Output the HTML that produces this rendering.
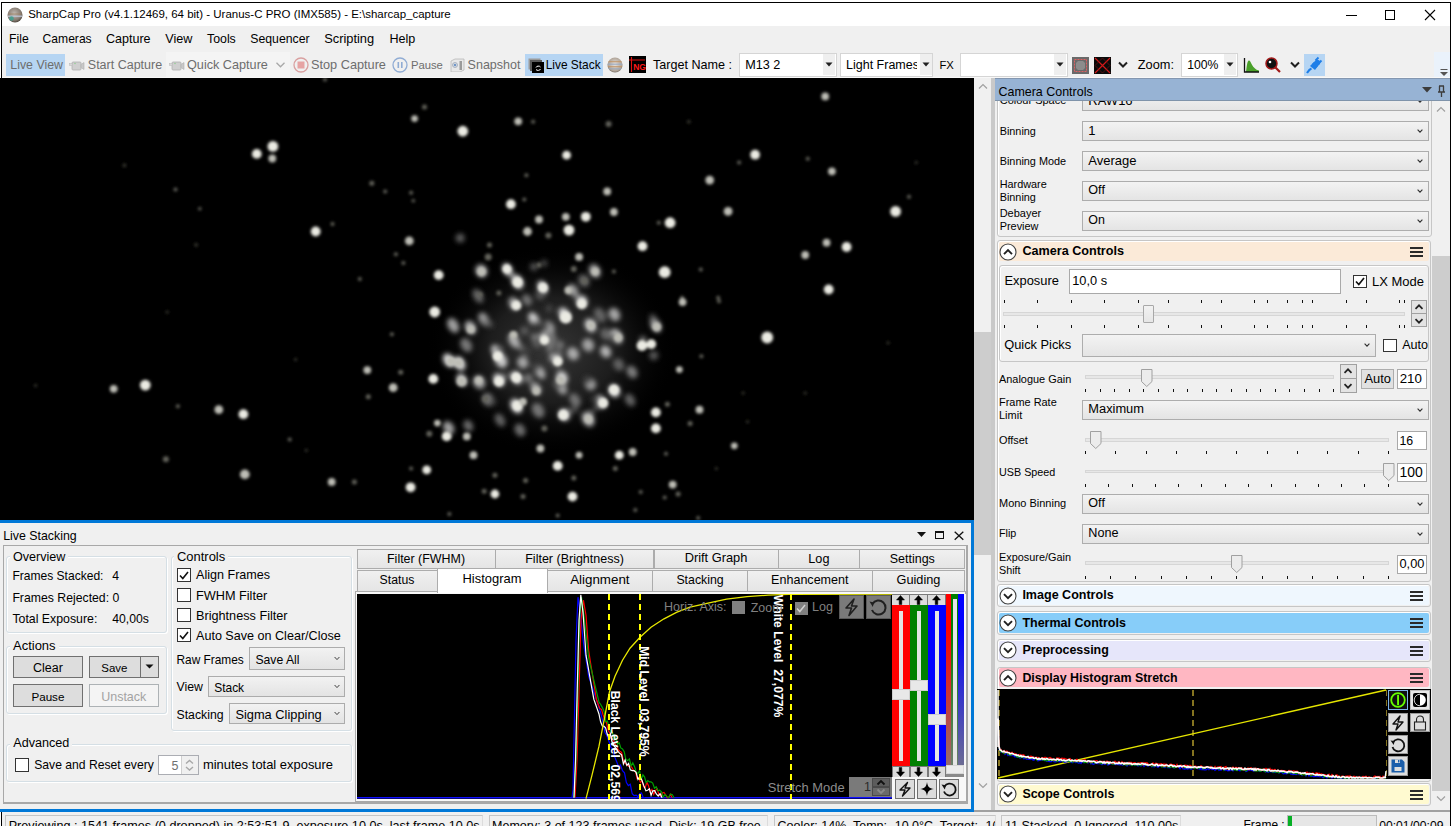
<!DOCTYPE html><html><head><meta charset="utf-8"><style>
html,body{margin:0;padding:0;width:1452px;height:826px;overflow:hidden;position:relative;font-family:"Liberation Sans",sans-serif}
div{position:absolute;box-sizing:border-box}
.t{white-space:nowrap}
</style></head><body>
<div style="left:0px;top:0px;width:1452px;height:826px;background:#ffffff"></div>
<div style="left:1px;top:2px;width:1450px;height:824px;background:#000"></div>
<div style="left:2px;top:3px;width:1448px;height:23px;background:#fff"></div>
<svg style="position:absolute;left:7px;top:7px;" width="16" height="16" viewBox="0 0 16 16"><defs><radialGradient id="jg" cx="45%" cy="40%" r="65%"><stop offset="0" stop-color="#c0b8b0"/><stop offset="0.7" stop-color="#857a70"/><stop offset="1" stop-color="#403830"/></radialGradient></defs><circle cx="8" cy="8" r="7.5" fill="url(#jg)"/><rect x="1" y="8.5" width="14" height="1.6" fill="#c0c8d8" opacity="0.8"/><rect x="1.5" y="6.5" width="13" height="1" fill="#a08060" opacity="0.7"/><circle cx="4.5" cy="11.5" r="2.3" fill="#40a090" opacity="0.85"/></svg>
<div class="t" style="left:28.2px;top:9.27px;font-size:11.49px;line-height:11.49px;color:#000;">SharpCap Pro (v4.1.12469, 64 bit) - Uranus-C PRO (IMX585) - E:\sharcap_capture</div>
<div style="left:1346px;top:15px;width:11px;height:1px;background:#000"></div>
<div style="left:1385px;top:10px;width:10px;height:10px;border:1px solid #000"></div>
<svg style="position:absolute;left:1424px;top:9px;" width="12" height="12" viewBox="0 0 12 12"><path d="M1 1L11 11M11 1L1 11" stroke="#000" stroke-width="1.1"/></svg>
<div style="left:2px;top:26px;width:1448px;height:26px;background:#f0f0f0"></div>
<div class="t" style="left:9.1px;top:33.25px;font-size:12.23px;line-height:12.23px;color:#000;">File</div>
<div class="t" style="left:42.6px;top:33.36px;font-size:12.1px;line-height:12.1px;color:#000;">Cameras</div>
<div class="t" style="left:106px;top:32.98px;font-size:12.54px;line-height:12.54px;color:#000;">Capture</div>
<div class="t" style="left:165.2px;top:32.89px;font-size:12.65px;line-height:12.65px;color:#000;">View</div>
<div class="t" style="left:207px;top:33.15px;font-size:12.34px;line-height:12.34px;color:#000;">Tools</div>
<div class="t" style="left:250.3px;top:33.20px;font-size:12.28px;line-height:12.28px;color:#000;">Sequencer</div>
<div class="t" style="left:324.2px;top:32.72px;font-size:12.85px;line-height:12.85px;color:#000;">Scripting</div>
<div class="t" style="left:389.4px;top:32.98px;font-size:12.55px;line-height:12.55px;color:#000;">Help</div>
<div style="left:2px;top:52px;width:1448px;height:25px;background:#f0f0f0"></div>
<div style="left:2px;top:77px;width:1448px;height:1px;background:#f8f8f8"></div>
<div style="left:166px;top:52px;width:124px;height:25px;background:#f4f4f4"></div>
<div style="left:6px;top:54px;width:59px;height:22px;background:#b6d5f3"></div>
<div class="t" style="left:10.3px;top:59.33px;font-size:12.37px;line-height:12.37px;color:#6d6d6d;">Live View</div>
<svg style="position:absolute;left:69px;top:60px;" width="16" height="11" viewBox="0 0 16 11"><rect x="3" y="2" width="9" height="8" rx="1" fill="#cfcfcf" stroke="#b0b0b0" stroke-width="0.8"/><path d="M12 4.5L15 2.5V9.5L12 7.5Z" fill="#c8c8c8" stroke="#b0b0b0" stroke-width="0.6"/><rect x="0.5" y="3.5" width="3" height="2" fill="#d8d8d8" stroke="#b8b8b8" stroke-width="0.5"/><circle cx="6" cy="3.5" r="0.7" fill="#8c8"/></svg>
<div class="t" style="left:87.8px;top:59.21px;font-size:12.51px;line-height:12.51px;color:#6d6d6d;">Start Capture</div>
<svg style="position:absolute;left:169px;top:60px;" width="16" height="11" viewBox="0 0 16 11"><rect x="3" y="2" width="9" height="8" rx="1" fill="#cfcfcf" stroke="#b0b0b0" stroke-width="0.8"/><path d="M12 4.5L15 2.5V9.5L12 7.5Z" fill="#c8c8c8" stroke="#b0b0b0" stroke-width="0.6"/><rect x="0.5" y="3.5" width="3" height="2" fill="#d8d8d8" stroke="#b8b8b8" stroke-width="0.5"/><circle cx="6" cy="3.5" r="0.7" fill="#8c8"/></svg>
<div class="t" style="left:187px;top:59.07px;font-size:12.67px;line-height:12.67px;color:#6d6d6d;">Quick Capture</div>
<svg style="position:absolute;left:276px;top:62px;" width="9" height="6" viewBox="0 0 9 6"><path d="M0.5 0.8L4.5 4.8L8.5 0.8" fill="none" stroke="#a8a8a8" stroke-width="1.3"/></svg>
<svg style="position:absolute;left:293px;top:57px;" width="16" height="16" viewBox="0 0 16 16"><circle cx="8" cy="8" r="7" fill="none" stroke="#d9a0a0" stroke-width="1.3"/><rect x="4.5" y="4.5" width="7" height="7" fill="#e6a3a3"/></svg>
<div class="t" style="left:311px;top:59.02px;font-size:12.73px;line-height:12.73px;color:#6d6d6d;">Stop Capture</div>
<svg style="position:absolute;left:392px;top:57px;" width="16" height="16" viewBox="0 0 16 16"><circle cx="8" cy="8" r="7" fill="none" stroke="#90acd4" stroke-width="1.3"/><rect x="5.5" y="5" width="1.6" height="6" fill="#90acd4"/><rect x="9" y="5" width="1.6" height="6" fill="#90acd4"/></svg>
<div class="t" style="left:410.9px;top:60.24px;font-size:11.29px;line-height:11.29px;color:#6d6d6d;">Pause</div>
<svg style="position:absolute;left:450px;top:58px;" width="15" height="14" viewBox="0 0 15 14"><path d="M1 3L5 1H14V12L10 14H1Z" fill="#e8e8e8" stroke="#b8b8b8" stroke-width="0.8"/><rect x="9.5" y="3" width="2.5" height="9" fill="#9a9a9a"/><circle cx="5" cy="7" r="2.5" fill="#d0d8e0" stroke="#a0a8b8" stroke-width="0.8"/><circle cx="5" cy="7" r="1" fill="#5080c0"/></svg>
<div class="t" style="left:467.6px;top:59.20px;font-size:12.52px;line-height:12.52px;color:#6d6d6d;">Snapshot</div>
<div style="left:525px;top:54px;width:78px;height:22px;background:#b6d5f3"></div>
<svg style="position:absolute;left:528px;top:58px;" width="16" height="15" viewBox="0 0 16 15"><rect x="0.5" y="0.5" width="12" height="11" fill="#9a9a9a"/><rect x="2" y="2" width="12" height="11" fill="#5a5a5a"/><rect x="4" y="4" width="12" height="11" fill="#000"/><path d="M8 9.5a2.5 2 0 0 1 4.5 -0.5M12.5 11a2.5 2 0 0 1 -4.5 0.5" fill="none" stroke="#fff" stroke-width="1"/></svg>
<div class="t" style="left:545.7px;top:59.71px;font-size:11.92px;line-height:11.92px;color:#000;">Live Stack</div>
<svg style="position:absolute;left:607px;top:57px;" width="16" height="16" viewBox="0 0 16 16"><defs><radialGradient id="jg2" cx="50%" cy="45%" r="60%"><stop offset="0" stop-color="#e8e4e0"/><stop offset="0.75" stop-color="#b0a498"/><stop offset="1" stop-color="#605850"/></radialGradient><clipPath id="jc"><circle cx="8" cy="8" r="7.5"/></clipPath></defs><circle cx="8" cy="8" r="7.5" fill="url(#jg2)"/><g clip-path="url(#jc)"><rect x="0" y="4" width="16" height="1.3" fill="#c09060" opacity="0.7"/><rect x="0" y="6.5" width="16" height="1.5" fill="#98a8c0" opacity="0.7"/><rect x="0" y="9" width="16" height="1.2" fill="#c09060" opacity="0.7"/><rect x="0" y="11" width="16" height="1.5" fill="#98a8c0" opacity="0.6"/></g></svg>
<svg style="position:absolute;left:629px;top:56px;" width="17" height="17" viewBox="0 0 17 17"><rect x="0" y="0" width="17" height="17" fill="#000"/><path d="M2.5 1V16M0 4H16" stroke="#e01010" stroke-width="1.1"/><text x="4.2" y="14" font-family="Liberation Sans" font-size="8.5" font-weight="bold" fill="#ff1a1a">NG</text></svg>
<div class="t" style="left:653px;top:59.15px;font-size:12.58px;line-height:12.58px;color:#000;">Target Name :</div>
<div style="left:738.7px;top:52.5px;width:98.0px;height:24.5px;background:#fff;border:1px solid #d5d5d5"></div>
<div style="left:822.7px;top:54px;width:12px;height:21px;background:#efefef"></div>
<svg style="position:absolute;left:824.7px;top:62px;" width="8" height="5" viewBox="0 0 8 5"><path d="M0.5 0.5H7.5L4 4.5Z" fill="#202020"/></svg>
<div class="t" style="left:745.2px;top:59.07px;font-size:12.67px;line-height:12.67px;color:#000;">M13 2</div>
<div style="left:839.7px;top:52.5px;width:93.79999999999995px;height:24.5px;background:#fff;border:1px solid #d5d5d5"></div>
<div style="left:919.5px;top:54px;width:12px;height:21px;background:#efefef"></div>
<svg style="position:absolute;left:921.5px;top:62px;" width="8" height="5" viewBox="0 0 8 5"><path d="M0.5 0.5H7.5L4 4.5Z" fill="#202020"/></svg>
<div class="t" style="left:846px;top:59.22px;width:71px;overflow:hidden;font-size:12.5px;line-height:12.5px">Light Frames</div>
<div class="t" style="left:939.5px;top:60.28px;font-size:11.25px;line-height:11.25px;color:#000;">FX</div>
<div style="left:959.7px;top:52.5px;width:107.89999999999986px;height:24.5px;background:#fff;border:1px solid #d5d5d5"></div>
<div style="left:1053.6px;top:54px;width:12px;height:21px;background:#efefef"></div>
<svg style="position:absolute;left:1055.6px;top:62px;" width="8" height="5" viewBox="0 0 8 5"><path d="M0.5 0.5H7.5L4 4.5Z" fill="#202020"/></svg>
<svg style="position:absolute;left:1072px;top:57px;" width="17" height="17" viewBox="0 0 17 17"><rect x="0" y="0" width="17" height="17" fill="#6a6a6a"/><rect x="2.5" y="2.5" width="12" height="12" fill="none" stroke="#e06060" stroke-width="1" stroke-dasharray="2 1"/><path d="M6 4H11L13 6V11L11 13H6L4 11V6Z" fill="#8c8c8c"/></svg>
<svg style="position:absolute;left:1094px;top:57px;" width="17" height="17" viewBox="0 0 17 17"><rect x="0" y="0" width="17" height="17" fill="#0a0a0a"/><path d="M1 1L16 16M16 1L1 16" stroke="#d01818" stroke-width="1.2"/><path d="M1 8.5L8.5 1L16 8.5L8.5 16Z" fill="none" stroke="#701010" stroke-width="0.7"/></svg>
<svg style="position:absolute;left:1118px;top:61px;" width="10" height="7" viewBox="0 0 10 7"><path d="M1 1.5L5 5.5L9 1.5" fill="none" stroke="#202020" stroke-width="2"/></svg>
<div class="t" style="left:1137.8px;top:58.99px;font-size:12.77px;line-height:12.77px;color:#000;">Zoom:</div>
<div style="left:1180.7px;top:52.5px;width:57.299999999999955px;height:24.5px;background:#fff;border:1px solid #d5d5d5"></div>
<div style="left:1224px;top:54px;width:12px;height:21px;background:#efefef"></div>
<svg style="position:absolute;left:1226px;top:62px;" width="8" height="5" viewBox="0 0 8 5"><path d="M0.5 0.5H7.5L4 4.5Z" fill="#202020"/></svg>
<div class="t" style="left:1187.2px;top:59.47px;font-size:12.2px;line-height:12.2px;color:#000;">100%</div>
<svg style="position:absolute;left:1243px;top:57px;" width="17" height="16" viewBox="0 0 17 16"><path d="M3 15C4 5 5 3.5 6 3.5C8 3.5 9 12 16 13.5V15Z" fill="#4aa02a"/><path d="M1.5 1V15H16" stroke="#101010" stroke-width="1.3" fill="none"/></svg>
<svg style="position:absolute;left:1265px;top:57px;" width="16" height="16" viewBox="0 0 16 16"><circle cx="6.5" cy="6.5" r="5.5" fill="#101010" stroke="#a01818" stroke-width="1.5"/><path d="M10.5 10.5L15 15" stroke="#a01818" stroke-width="2.2"/><circle cx="5" cy="5" r="1.3" fill="#fff"/></svg>
<svg style="position:absolute;left:1290px;top:61px;" width="10" height="7" viewBox="0 0 10 7"><path d="M1 1.5L5 5.5L9 1.5" fill="none" stroke="#202020" stroke-width="2"/></svg>
<div style="left:1303.6px;top:54px;width:21px;height:22px;background:#b6d5f3"></div>
<svg style="position:absolute;left:1305px;top:56px;" width="18" height="18" viewBox="0 0 18 18"><path d="M2 17C4 14 5 13 6.5 12.5" stroke="#1f7fe8" stroke-width="2.2" fill="none"/><path d="M5 10L9 6L13 10L10 14Z" fill="#1f7fe8"/><path d="M7 8L11 4A3 3 0 0 1 15 8L11 12Z" fill="#1f7fe8"/><path d="M10.5 4.5L13.5 1.5M13.5 7.5L16.5 4.5" stroke="#1f7fe8" stroke-width="1.8"/></svg>
<div style="left:1434px;top:52px;width:16px;height:25px;background:#eaf2fb"></div>
<svg style="position:absolute;left:1440px;top:69px;" width="8" height="8" viewBox="0 0 8 8"><path d="M0.5 0.5H7.5" stroke="#555" stroke-width="1"/><path d="M0 3H8L4 7Z" fill="#555"/></svg>
<div style="left:0px;top:78px;width:974px;height:442px;background:#000"></div>
<svg style="position:absolute;left:0px;top:78px;" width="974" height="442" viewBox="0 0 974 442"><defs><filter id="bl" x="-50%" y="-50%" width="200%" height="200%"><feGaussianBlur stdDeviation="1.4"/></filter><filter id="bl3" x="-50%" y="-50%" width="200%" height="200%"><feGaussianBlur stdDeviation="2.4"/></filter><radialGradient id="core" cx="50%" cy="50%" r="50%"><stop offset="0" stop-color="#6a6a6a"/><stop offset="0.5" stop-color="#3a3a3a"/><stop offset="1" stop-color="#000" stop-opacity="0"/></radialGradient></defs><ellipse cx="552" cy="272" rx="125" ry="105" fill="url(#core)" opacity="0.5"/><g filter="url(#bl3)"><ellipse cx="481.4" cy="192.9" rx="5.9" ry="6.8" transform="rotate(-30 481.4 192.9)" fill="rgb(160,160,160)"/><ellipse cx="507.6" cy="191.8" rx="4.6" ry="7.1" transform="rotate(-30 507.6 191.8)" fill="rgb(201,201,201)"/><ellipse cx="517.4" cy="203.8" rx="5.4" ry="7.8" transform="rotate(-30 517.4 203.8)" fill="rgb(211,211,211)"/><ellipse cx="542.5" cy="209.2" rx="4.6" ry="6.9" transform="rotate(-30 542.5 209.2)" fill="rgb(206,206,206)"/><ellipse cx="573.0" cy="212.5" rx="4.9" ry="7.1" transform="rotate(-30 573.0 212.5)" fill="rgb(152,152,152)"/><ellipse cx="581.7" cy="223.4" rx="5.7" ry="6.2" transform="rotate(-30 581.7 223.4)" fill="rgb(201,201,201)"/><ellipse cx="594.8" cy="192.9" rx="5.4" ry="7.2" transform="rotate(-30 594.8 192.9)" fill="rgb(157,157,157)"/><ellipse cx="583.9" cy="202.7" rx="5.4" ry="6.8" transform="rotate(-30 583.9 202.7)" fill="rgb(96,96,96)"/><ellipse cx="478.1" cy="218.0" rx="4.6" ry="7.7" transform="rotate(-30 478.1 218.0)" fill="rgb(102,102,102)"/><ellipse cx="514.1" cy="225.6" rx="5.1" ry="7.1" transform="rotate(-30 514.1 225.6)" fill="rgb(159,159,159)"/><ellipse cx="564.3" cy="236.5" rx="5.0" ry="7.6" transform="rotate(-30 564.3 236.5)" fill="rgb(218,218,218)"/><ellipse cx="533.7" cy="240.9" rx="4.7" ry="7.1" transform="rotate(-30 533.7 240.9)" fill="rgb(205,205,205)"/><ellipse cx="549.0" cy="249.6" rx="5.1" ry="7.1" transform="rotate(-30 549.0 249.6)" fill="rgb(156,156,156)"/><ellipse cx="590.4" cy="247.4" rx="5.3" ry="7.2" transform="rotate(-30 590.4 247.4)" fill="rgb(202,202,202)"/><ellipse cx="614.4" cy="236.5" rx="5.5" ry="6.9" transform="rotate(-30 614.4 236.5)" fill="rgb(165,165,165)"/><ellipse cx="616.6" cy="258.3" rx="5.2" ry="7.8" transform="rotate(-30 616.6 258.3)" fill="rgb(210,210,210)"/><ellipse cx="655.8" cy="247.4" rx="4.9" ry="7.6" transform="rotate(-30 655.8 247.4)" fill="rgb(161,161,161)"/><ellipse cx="544.6" cy="260.5" rx="5.7" ry="6.2" transform="rotate(-30 544.6 260.5)" fill="rgb(222,222,222)"/><ellipse cx="453.1" cy="247.4" rx="5.3" ry="7.8" transform="rotate(-30 453.1 247.4)" fill="rgb(159,159,159)"/><ellipse cx="470.5" cy="249.6" rx="5.2" ry="7.2" transform="rotate(-30 470.5 249.6)" fill="rgb(173,173,173)"/><ellipse cx="483.6" cy="240.9" rx="4.7" ry="6.8" transform="rotate(-30 483.6 240.9)" fill="rgb(152,152,152)"/><ellipse cx="514.1" cy="262.7" rx="5.0" ry="7.9" transform="rotate(-30 514.1 262.7)" fill="rgb(174,174,174)"/><ellipse cx="496.7" cy="273.6" rx="4.6" ry="7.3" transform="rotate(-30 496.7 273.6)" fill="rgb(213,213,213)"/><ellipse cx="466.2" cy="267.0" rx="5.3" ry="7.6" transform="rotate(-30 466.2 267.0)" fill="rgb(119,119,119)"/><ellipse cx="448.7" cy="282.3" rx="5.0" ry="7.4" transform="rotate(-30 448.7 282.3)" fill="rgb(226,226,226)"/><ellipse cx="459.6" cy="285.5" rx="5.2" ry="7.6" transform="rotate(-30 459.6 285.5)" fill="rgb(219,219,219)"/><ellipse cx="501.0" cy="282.3" rx="5.8" ry="7.9" transform="rotate(-30 501.0 282.3)" fill="rgb(202,202,202)"/><ellipse cx="522.8" cy="284.5" rx="5.5" ry="6.1" transform="rotate(-30 522.8 284.5)" fill="rgb(165,165,165)"/><ellipse cx="555.5" cy="282.3" rx="5.6" ry="7.3" transform="rotate(-30 555.5 282.3)" fill="rgb(223,223,223)"/><ellipse cx="573.0" cy="275.7" rx="5.7" ry="6.6" transform="rotate(-30 573.0 275.7)" fill="rgb(171,171,171)"/><ellipse cx="588.2" cy="267.0" rx="5.8" ry="6.7" transform="rotate(-30 588.2 267.0)" fill="rgb(162,162,162)"/><ellipse cx="605.7" cy="273.6" rx="5.2" ry="6.3" transform="rotate(-30 605.7 273.6)" fill="rgb(180,180,180)"/><ellipse cx="618.7" cy="286.6" rx="5.2" ry="6.4" transform="rotate(-30 618.7 286.6)" fill="rgb(98,98,98)"/><ellipse cx="461.8" cy="301.9" rx="4.7" ry="6.5" transform="rotate(-30 461.8 301.9)" fill="rgb(209,209,209)"/><ellipse cx="479.2" cy="304.1" rx="5.9" ry="7.0" transform="rotate(-30 479.2 304.1)" fill="rgb(162,162,162)"/><ellipse cx="498.9" cy="301.9" rx="5.2" ry="7.1" transform="rotate(-30 498.9 301.9)" fill="rgb(205,205,205)"/><ellipse cx="516.3" cy="299.7" rx="4.7" ry="6.9" transform="rotate(-30 516.3 299.7)" fill="rgb(228,228,228)"/><ellipse cx="535.9" cy="310.6" rx="4.9" ry="6.8" transform="rotate(-30 535.9 310.6)" fill="rgb(167,167,167)"/><ellipse cx="562.1" cy="299.7" rx="5.5" ry="6.8" transform="rotate(-30 562.1 299.7)" fill="rgb(211,211,211)"/><ellipse cx="562.1" cy="310.6" rx="4.7" ry="6.4" transform="rotate(-30 562.1 310.6)" fill="rgb(157,157,157)"/><ellipse cx="590.4" cy="306.3" rx="5.5" ry="6.0" transform="rotate(-30 590.4 306.3)" fill="rgb(157,157,157)"/><ellipse cx="614.4" cy="312.8" rx="5.4" ry="6.5" transform="rotate(-30 614.4 312.8)" fill="rgb(226,226,226)"/><ellipse cx="601.3" cy="323.7" rx="4.7" ry="7.1" transform="rotate(-30 601.3 323.7)" fill="rgb(200,200,200)"/><ellipse cx="516.3" cy="328.0" rx="5.3" ry="7.9" transform="rotate(-30 516.3 328.0)" fill="rgb(219,219,219)"/><ellipse cx="538.1" cy="332.4" rx="5.8" ry="7.9" transform="rotate(-30 538.1 332.4)" fill="rgb(117,117,117)"/><ellipse cx="564.3" cy="336.8" rx="5.5" ry="6.1" transform="rotate(-30 564.3 336.8)" fill="rgb(220,220,220)"/><ellipse cx="588.2" cy="341.1" rx="5.8" ry="7.9" transform="rotate(-30 588.2 341.1)" fill="rgb(178,178,178)"/><ellipse cx="488.0" cy="321.5" rx="5.7" ry="6.8" transform="rotate(-30 488.0 321.5)" fill="rgb(116,116,116)"/><ellipse cx="448.7" cy="349.8" rx="5.1" ry="7.0" transform="rotate(-30 448.7 349.8)" fill="rgb(162,162,162)"/><ellipse cx="468.3" cy="347.7" rx="4.6" ry="6.1" transform="rotate(-30 468.3 347.7)" fill="rgb(107,107,107)"/><ellipse cx="605.7" cy="256.1" rx="5.2" ry="6.2" transform="rotate(-30 605.7 256.1)" fill="rgb(101,101,101)"/><ellipse cx="527.0" cy="222.0" rx="4.6" ry="6.0" transform="rotate(-30 527.0 222.0)" fill="rgb(114,114,114)"/><ellipse cx="600.0" cy="237.0" rx="5.3" ry="7.9" transform="rotate(-30 600.0 237.0)" fill="rgb(99,99,99)"/><ellipse cx="540.0" cy="294.0" rx="4.5" ry="7.7" transform="rotate(-30 540.0 294.0)" fill="rgb(169,169,169)"/><ellipse cx="575.0" cy="322.0" rx="5.1" ry="7.3" transform="rotate(-30 575.0 322.0)" fill="rgb(114,114,114)"/><ellipse cx="632.0" cy="294.0" rx="5.0" ry="6.7" transform="rotate(-30 632.0 294.0)" fill="rgb(125,125,125)"/><ellipse cx="500.0" cy="342.0" rx="4.7" ry="7.0" transform="rotate(-30 500.0 342.0)" fill="rgb(98,98,98)"/><ellipse cx="520.0" cy="352.0" rx="5.2" ry="6.6" transform="rotate(-30 520.0 352.0)" fill="rgb(109,109,109)"/><ellipse cx="630.0" cy="322.0" rx="4.7" ry="6.7" transform="rotate(-30 630.0 322.0)" fill="rgb(99,99,99)"/><circle cx="555.3" cy="274.4" r="3.4" fill="rgb(61,61,61)"/><circle cx="652.7" cy="239.2" r="3.3" fill="rgb(83,83,83)"/><circle cx="537.2" cy="265.0" r="4.7" fill="rgb(101,101,101)"/><circle cx="548.8" cy="264.0" r="4.0" fill="rgb(76,76,76)"/><circle cx="557.7" cy="305.7" r="4.6" fill="rgb(94,94,94)"/><circle cx="535.9" cy="289.4" r="4.2" fill="rgb(74,74,74)"/><circle cx="557.8" cy="286.0" r="4.6" fill="rgb(75,75,75)"/><circle cx="544.0" cy="185.3" r="3.4" fill="rgb(74,74,74)"/><circle cx="642.9" cy="261.7" r="3.6" fill="rgb(110,110,110)"/><circle cx="549.8" cy="270.7" r="4.2" fill="rgb(104,104,104)"/><circle cx="540.2" cy="217.0" r="4.9" fill="rgb(82,82,82)"/><circle cx="492.8" cy="323.7" r="3.2" fill="rgb(74,74,74)"/><circle cx="499.0" cy="271.9" r="4.2" fill="rgb(117,117,117)"/><circle cx="559.8" cy="267.1" r="4.3" fill="rgb(118,118,118)"/><circle cx="546.0" cy="261.5" r="3.8" fill="rgb(118,118,118)"/><circle cx="544.5" cy="247.6" r="4.0" fill="rgb(72,72,72)"/><circle cx="528.2" cy="300.3" r="4.9" fill="rgb(111,111,111)"/><circle cx="533.9" cy="188.8" r="3.8" fill="rgb(89,89,89)"/><circle cx="592.0" cy="333.5" r="3.1" fill="rgb(68,68,68)"/><circle cx="524.5" cy="252.8" r="4.6" fill="rgb(89,89,89)"/><circle cx="614.8" cy="260.0" r="4.9" fill="rgb(102,102,102)"/><circle cx="597.7" cy="328.7" r="3.3" fill="rgb(95,95,95)"/><circle cx="460.2" cy="160.0" r="4.5" fill="rgb(93,93,93)"/><circle cx="558.8" cy="276.1" r="3.4" fill="rgb(115,115,115)"/><circle cx="552.2" cy="275.1" r="3.5" fill="rgb(92,92,92)"/><circle cx="541.6" cy="262.6" r="4.1" fill="rgb(76,76,76)"/><circle cx="549.3" cy="258.1" r="3.9" fill="rgb(117,117,117)"/><circle cx="534.8" cy="259.3" r="4.0" fill="rgb(117,117,117)"/><circle cx="587.4" cy="302.0" r="4.0" fill="rgb(69,69,69)"/><circle cx="653.7" cy="277.6" r="4.6" fill="rgb(88,88,88)"/><circle cx="595.5" cy="321.3" r="3.9" fill="rgb(69,69,69)"/><circle cx="540.3" cy="213.1" r="3.1" fill="rgb(95,95,95)"/><circle cx="521.0" cy="269.8" r="3.2" fill="rgb(109,109,109)"/><circle cx="490.1" cy="246.3" r="3.4" fill="rgb(75,75,75)"/><circle cx="526.0" cy="273.5" r="4.5" fill="rgb(61,61,61)"/><circle cx="555.8" cy="263.9" r="3.7" fill="rgb(88,88,88)"/><circle cx="574.2" cy="330.9" r="3.9" fill="rgb(77,77,77)"/><circle cx="537.2" cy="264.6" r="4.0" fill="rgb(90,90,90)"/><circle cx="550.7" cy="266.4" r="3.5" fill="rgb(119,119,119)"/><circle cx="484.9" cy="244.8" r="3.4" fill="rgb(120,120,120)"/><circle cx="505.9" cy="297.7" r="3.1" fill="rgb(80,80,80)"/><circle cx="551.1" cy="283.8" r="3.4" fill="rgb(64,64,64)"/><circle cx="551.6" cy="258.8" r="4.4" fill="rgb(120,120,120)"/><circle cx="535.2" cy="246.6" r="3.5" fill="rgb(69,69,69)"/><circle cx="549.1" cy="230.5" r="3.8" fill="rgb(66,66,66)"/></g><g filter="url(#bl)"><circle cx="256.8" cy="75.9" r="4.9" fill="rgb(235,235,227)"/><circle cx="272.9" cy="68.4" r="5.4" fill="rgb(235,235,227)"/><circle cx="272.3" cy="80.5" r="3.9" fill="rgb(190,190,182)"/><circle cx="315.7" cy="153.5" r="4.9" fill="rgb(235,235,227)"/><circle cx="124.4" cy="87.4" r="1.8" fill="rgb(60,60,52)"/><circle cx="175.5" cy="111.5" r="2.0" fill="rgb(100,100,92)"/><circle cx="199.8" cy="130.7" r="1.8" fill="rgb(100,100,92)"/><circle cx="196.1" cy="166.9" r="1.8" fill="rgb(60,60,52)"/><circle cx="462.8" cy="53.2" r="5.4" fill="rgb(235,235,227)"/><circle cx="414.6" cy="40.6" r="3.4" fill="rgb(190,190,182)"/><circle cx="424.5" cy="29.1" r="2.5" fill="rgb(100,100,92)"/><circle cx="518.2" cy="43.3" r="3.9" fill="rgb(190,190,182)"/><circle cx="533.1" cy="43.8" r="2.0" fill="rgb(100,100,92)"/><circle cx="608.6" cy="46.0" r="3.0" fill="rgb(100,100,92)"/><circle cx="566.6" cy="77.2" r="4.4" fill="rgb(235,235,227)"/><circle cx="510.9" cy="126.2" r="4.9" fill="rgb(235,235,227)"/><circle cx="524.3" cy="121.4" r="2.0" fill="rgb(100,100,92)"/><circle cx="526.4" cy="97.3" r="2.0" fill="rgb(100,100,92)"/><circle cx="371.8" cy="105.3" r="2.5" fill="rgb(100,100,92)"/><circle cx="385.2" cy="113.4" r="2.0" fill="rgb(100,100,92)"/><circle cx="411.1" cy="114.7" r="2.0" fill="rgb(100,100,92)"/><circle cx="413.3" cy="122.7" r="1.8" fill="rgb(100,100,92)"/><circle cx="607.2" cy="113.4" r="3.9" fill="rgb(190,190,182)"/><circle cx="613.9" cy="134.0" r="3.9" fill="rgb(190,190,182)"/><circle cx="585.8" cy="138.8" r="4.9" fill="rgb(235,235,227)"/><circle cx="565.8" cy="138.8" r="3.9" fill="rgb(190,190,182)"/><circle cx="569.0" cy="152.1" r="5.4" fill="rgb(235,235,227)"/><circle cx="539.0" cy="141.5" r="3.9" fill="rgb(190,190,182)"/><circle cx="527.5" cy="153.5" r="4.4" fill="rgb(190,190,182)"/><circle cx="548.4" cy="157.5" r="3.0" fill="rgb(100,100,92)"/><circle cx="642.5" cy="168.2" r="4.9" fill="rgb(235,235,227)"/><circle cx="409.3" cy="162.9" r="4.4" fill="rgb(190,190,182)"/><circle cx="395.9" cy="176.2" r="2.0" fill="rgb(100,100,92)"/><circle cx="403.4" cy="185.1" r="2.0" fill="rgb(100,100,92)"/><circle cx="332.5" cy="146.0" r="2.0" fill="rgb(100,100,92)"/><circle cx="359.8" cy="201.1" r="2.0" fill="rgb(100,100,92)"/><circle cx="438.7" cy="197.1" r="4.9" fill="rgb(235,235,227)"/><circle cx="481.5" cy="193.6" r="4.4" fill="rgb(190,190,182)"/><circle cx="488.2" cy="178.9" r="3.5" fill="rgb(100,100,92)"/><circle cx="489.5" cy="166.9" r="2.5" fill="rgb(100,100,92)"/><circle cx="506.9" cy="191.0" r="4.4" fill="rgb(235,235,227)"/><circle cx="517.6" cy="204.3" r="4.9" fill="rgb(235,235,227)"/><circle cx="543.0" cy="209.7" r="4.9" fill="rgb(235,235,227)"/><circle cx="579.1" cy="178.9" r="3.9" fill="rgb(190,190,182)"/><circle cx="573.8" cy="191.0" r="3.0" fill="rgb(100,100,92)"/><circle cx="595.2" cy="193.6" r="3.9" fill="rgb(190,190,182)"/><circle cx="584.5" cy="203.0" r="3.0" fill="rgb(100,100,92)"/><circle cx="539.0" cy="186.9" r="2.5" fill="rgb(100,100,92)"/><circle cx="568.4" cy="212.3" r="3.9" fill="rgb(190,190,182)"/><circle cx="480.2" cy="216.4" r="2.5" fill="rgb(100,100,92)"/><circle cx="498.9" cy="215.0" r="2.5" fill="rgb(100,100,92)"/><circle cx="613.9" cy="193.6" r="2.0" fill="rgb(100,100,92)"/><circle cx="325.0" cy="1.5" r="2.0" fill="rgb(100,100,92)"/><circle cx="825.2" cy="18.4" r="3.9" fill="rgb(190,190,182)"/><circle cx="688.8" cy="43.8" r="1.8" fill="rgb(60,60,52)"/><circle cx="755.1" cy="76.7" r="4.9" fill="rgb(235,235,227)"/><circle cx="739.1" cy="84.5" r="2.0" fill="rgb(100,100,92)"/><circle cx="709.7" cy="102.1" r="4.4" fill="rgb(190,190,182)"/><circle cx="807.8" cy="80.7" r="2.0" fill="rgb(100,100,92)"/><circle cx="831.9" cy="93.3" r="3.9" fill="rgb(190,190,182)"/><circle cx="916.2" cy="84.5" r="1.5" fill="rgb(60,60,52)"/><circle cx="909.0" cy="118.7" r="2.0" fill="rgb(100,100,92)"/><circle cx="895.6" cy="133.4" r="5.4" fill="rgb(235,235,227)"/><circle cx="728.1" cy="133.4" r="4.4" fill="rgb(190,190,182)"/><circle cx="670.1" cy="144.7" r="5.4" fill="rgb(235,235,227)"/><circle cx="658.8" cy="144.7" r="2.0" fill="rgb(100,100,92)"/><circle cx="826.6" cy="164.7" r="3.9" fill="rgb(190,190,182)"/><circle cx="846.6" cy="169.0" r="4.9" fill="rgb(235,235,227)"/><circle cx="805.2" cy="177.0" r="3.9" fill="rgb(190,190,182)"/><circle cx="664.7" cy="194.2" r="5.9" fill="rgb(235,235,227)"/><circle cx="700.8" cy="191.5" r="2.0" fill="rgb(100,100,92)"/><circle cx="828.7" cy="211.5" r="4.9" fill="rgb(235,235,227)"/><circle cx="718.2" cy="219.8" r="2.0" fill="rgb(100,100,92)"/><circle cx="682.1" cy="219.8" r="2.0" fill="rgb(100,100,92)"/><circle cx="145.3" cy="307.1" r="5.4" fill="rgb(235,235,227)"/><circle cx="113.7" cy="310.8" r="3.9" fill="rgb(190,190,182)"/><circle cx="177.9" cy="328.2" r="2.0" fill="rgb(100,100,92)"/><circle cx="218.8" cy="331.7" r="4.4" fill="rgb(190,190,182)"/><circle cx="243.4" cy="336.2" r="4.9" fill="rgb(235,235,227)"/><circle cx="165.9" cy="381.2" r="3.0" fill="rgb(100,100,92)"/><circle cx="244.8" cy="396.4" r="4.9" fill="rgb(190,190,182)"/><circle cx="289.7" cy="361.6" r="2.0" fill="rgb(100,100,92)"/><circle cx="306.3" cy="372.3" r="1.5" fill="rgb(60,60,52)"/><circle cx="35.6" cy="307.6" r="1.5" fill="rgb(60,60,52)"/><circle cx="295.6" cy="281.4" r="1.5" fill="rgb(60,60,52)"/><circle cx="167.2" cy="234.0" r="1.5" fill="rgb(60,60,52)"/><circle cx="434.7" cy="234.0" r="5.4" fill="rgb(235,235,227)"/><circle cx="391.9" cy="256.2" r="2.0" fill="rgb(100,100,92)"/><circle cx="367.3" cy="292.1" r="3.9" fill="rgb(190,190,182)"/><circle cx="393.2" cy="309.7" r="4.4" fill="rgb(190,190,182)"/><circle cx="368.3" cy="318.8" r="2.5" fill="rgb(100,100,92)"/><circle cx="400.7" cy="294.2" r="2.5" fill="rgb(100,100,92)"/><circle cx="433.3" cy="300.9" r="4.9" fill="rgb(235,235,227)"/><circle cx="450.7" cy="283.5" r="4.4" fill="rgb(190,190,182)"/><circle cx="458.8" cy="284.9" r="4.4" fill="rgb(190,190,182)"/><circle cx="461.4" cy="303.6" r="4.9" fill="rgb(190,190,182)"/><circle cx="470.8" cy="251.4" r="3.9" fill="rgb(190,190,182)"/><circle cx="478.8" cy="302.3" r="3.9" fill="rgb(190,190,182)"/><circle cx="497.6" cy="278.2" r="4.9" fill="rgb(235,235,227)"/><circle cx="498.9" cy="303.6" r="4.9" fill="rgb(235,235,227)"/><circle cx="516.3" cy="299.6" r="4.9" fill="rgb(235,235,227)"/><circle cx="513.6" cy="256.8" r="3.9" fill="rgb(190,190,182)"/><circle cx="516.3" cy="227.4" r="4.9" fill="rgb(235,235,227)"/><circle cx="544.4" cy="262.1" r="4.9" fill="rgb(235,235,227)"/><circle cx="565.8" cy="239.4" r="5.9" fill="rgb(235,235,227)"/><circle cx="557.7" cy="283.5" r="4.9" fill="rgb(235,235,227)"/><circle cx="560.4" cy="302.3" r="4.4" fill="rgb(190,190,182)"/><circle cx="581.8" cy="226.0" r="4.9" fill="rgb(235,235,227)"/><circle cx="591.2" cy="247.4" r="3.9" fill="rgb(190,190,182)"/><circle cx="618.0" cy="259.5" r="4.4" fill="rgb(190,190,182)"/><circle cx="642.0" cy="267.5" r="5.4" fill="rgb(235,235,227)"/><circle cx="614.0" cy="311.6" r="4.9" fill="rgb(235,235,227)"/><circle cx="603.2" cy="325.0" r="4.9" fill="rgb(235,235,227)"/><circle cx="563.1" cy="337.0" r="4.9" fill="rgb(235,235,227)"/><circle cx="588.5" cy="341.0" r="3.9" fill="rgb(190,190,182)"/><circle cx="517.6" cy="327.7" r="4.9" fill="rgb(235,235,227)"/><circle cx="523.0" cy="323.7" r="3.9" fill="rgb(190,190,182)"/><circle cx="536.3" cy="313.0" r="3.9" fill="rgb(190,190,182)"/><circle cx="485.5" cy="321.0" r="3.0" fill="rgb(100,100,92)"/><circle cx="446.7" cy="358.4" r="4.9" fill="rgb(235,235,227)"/><circle cx="437.4" cy="345.1" r="3.4" fill="rgb(190,190,182)"/><circle cx="429.3" cy="355.8" r="3.0" fill="rgb(100,100,92)"/><circle cx="466.8" cy="358.4" r="3.9" fill="rgb(190,190,182)"/><circle cx="473.5" cy="377.2" r="3.9" fill="rgb(190,190,182)"/><circle cx="544.4" cy="350.4" r="3.0" fill="rgb(100,100,92)"/><circle cx="540.4" cy="370.5" r="3.9" fill="rgb(190,190,182)"/><circle cx="557.7" cy="387.9" r="4.9" fill="rgb(235,235,227)"/><circle cx="579.1" cy="377.2" r="3.4" fill="rgb(190,190,182)"/><circle cx="619.3" cy="377.2" r="4.4" fill="rgb(235,235,227)"/><circle cx="632.7" cy="374.0" r="3.9" fill="rgb(190,190,182)"/><circle cx="615.3" cy="390.5" r="2.5" fill="rgb(100,100,92)"/><circle cx="426.7" cy="391.9" r="4.4" fill="rgb(235,235,227)"/><circle cx="410.6" cy="409.3" r="4.9" fill="rgb(235,235,227)"/><circle cx="411.1" cy="390.5" r="2.0" fill="rgb(100,100,92)"/><circle cx="331.7" cy="403.9" r="3.9" fill="rgb(190,190,182)"/><circle cx="354.4" cy="403.9" r="2.5" fill="rgb(100,100,92)"/><circle cx="494.9" cy="416.0" r="4.4" fill="rgb(235,235,227)"/><circle cx="484.2" cy="413.3" r="2.5" fill="rgb(100,100,92)"/><circle cx="494.9" cy="397.2" r="2.5" fill="rgb(100,100,92)"/><circle cx="525.6" cy="402.6" r="2.5" fill="rgb(100,100,92)"/><circle cx="523.0" cy="418.6" r="2.5" fill="rgb(100,100,92)"/><circle cx="573.8" cy="399.9" r="2.5" fill="rgb(100,100,92)"/><circle cx="572.5" cy="418.6" r="4.9" fill="rgb(235,235,227)"/><circle cx="640.7" cy="414.1" r="2.0" fill="rgb(100,100,92)"/><circle cx="635.3" cy="432.0" r="2.0" fill="rgb(100,100,92)"/><circle cx="557.7" cy="437.4" r="2.0" fill="rgb(100,100,92)"/><circle cx="449.4" cy="436.0" r="2.0" fill="rgb(100,100,92)"/><circle cx="767.2" cy="259.5" r="5.9" fill="rgb(235,235,227)"/><circle cx="656.7" cy="248.8" r="4.4" fill="rgb(190,190,182)"/><circle cx="651.3" cy="266.1" r="4.9" fill="rgb(235,235,227)"/><circle cx="682.6" cy="224.1" r="3.9" fill="rgb(190,190,182)"/><circle cx="719.0" cy="223.3" r="2.0" fill="rgb(100,100,92)"/><circle cx="679.4" cy="291.6" r="3.4" fill="rgb(190,190,182)"/><circle cx="701.4" cy="278.2" r="2.0" fill="rgb(100,100,92)"/><circle cx="743.1" cy="315.1" r="1.5" fill="rgb(60,60,52)"/><circle cx="805.2" cy="315.1" r="1.5" fill="rgb(60,60,52)"/><circle cx="888.1" cy="264.8" r="1.5" fill="rgb(60,60,52)"/><circle cx="655.9" cy="334.4" r="4.9" fill="rgb(235,235,227)"/><circle cx="655.9" cy="350.4" r="4.9" fill="rgb(235,235,227)"/><circle cx="667.4" cy="326.3" r="2.5" fill="rgb(100,100,92)"/><circle cx="699.5" cy="331.7" r="3.9" fill="rgb(190,190,182)"/><circle cx="690.1" cy="345.6" r="2.5" fill="rgb(100,100,92)"/><circle cx="734.3" cy="367.8" r="3.4" fill="rgb(190,190,182)"/><circle cx="747.6" cy="343.7" r="1.5" fill="rgb(60,60,52)"/><circle cx="666.0" cy="375.8" r="2.0" fill="rgb(100,100,92)"/><circle cx="716.3" cy="390.5" r="1.5" fill="rgb(60,60,52)"/><circle cx="672.7" cy="406.6" r="3.9" fill="rgb(190,190,182)"/><circle cx="678.1" cy="416.0" r="2.5" fill="rgb(100,100,92)"/><circle cx="664.7" cy="419.4" r="2.0" fill="rgb(100,100,92)"/><circle cx="698.2" cy="440.0" r="2.0" fill="rgb(100,100,92)"/></g></svg>
<div style="left:974px;top:78px;width:476px;height:732px;background:#f0f0f0"></div>
<div style="left:974px;top:332px;width:17px;height:223px;background:#cdcdcd"></div>
<svg style="position:absolute;left:978px;top:83px;" width="10" height="7" viewBox="0 0 10 7"><path d="M1 5.5L5 1.5L9 5.5" fill="none" stroke="#a0a0a0" stroke-width="1.2"/></svg>
<svg style="position:absolute;left:978px;top:782px;" width="10" height="7" viewBox="0 0 10 7"><path d="M1 1.5L5 5.5L9 1.5" fill="none" stroke="#a0a0a0" stroke-width="1.2"/></svg>
<div style="left:991px;top:78px;width:4px;height:732px;background:#c9c9c9"></div>
<div style="left:1432px;top:256px;width:18px;height:535px;background:#cdcdcd"></div>
<svg style="position:absolute;left:1436px;top:106px;" width="10" height="7" viewBox="0 0 10 7"><path d="M1 5.5L5 1.5L9 5.5" fill="none" stroke="#a0a0a0" stroke-width="1.2"/></svg>
<svg style="position:absolute;left:1436px;top:795px;" width="10" height="7" viewBox="0 0 10 7"><path d="M1 1.5L5 5.5L9 1.5" fill="none" stroke="#a0a0a0" stroke-width="1.2"/></svg>
<div style="left:996.5px;top:85px;width:435.0px;height:152px;border:1px solid #c6c6c6;border-radius:3px;box-shadow:inset 1px 1px 0 #fff;"></div>
<div class="t" style="left:999.7px;top:95.39px;font-size:11px;line-height:11px;color:#000;">Colour Space</div>
<div style="left:1082.3px;top:91px;width:346.4000000000001px;height:20px;border:1px solid #adadad;background:linear-gradient(#f3f3f3,#e4e4e4)"></div>
<svg style="position:absolute;left:1416.7px;top:99.0px;" width="6" height="4" viewBox="0 0 6 4"><path d="M0.6 0.6L3 3.2L5.4 0.6" fill="none" stroke="#303030" stroke-width="1.1"/></svg>
<div class="t" style="left:1088.3px;top:93.80px;font-size:13px;line-height:13px;color:#000;">RAW16</div>
<div class="t" style="left:999.7px;top:125.52px;font-size:10.85px;line-height:10.85px;color:#000;">Binning</div>
<div style="left:1082.3px;top:121px;width:346.4000000000001px;height:20px;border:1px solid #adadad;background:linear-gradient(#f3f3f3,#e4e4e4)"></div>
<svg style="position:absolute;left:1416.7px;top:129.0px;" width="6" height="4" viewBox="0 0 6 4"><path d="M0.6 0.6L3 3.2L5.4 0.6" fill="none" stroke="#303030" stroke-width="1.1"/></svg>
<div class="t" style="left:1088.3px;top:123.80px;font-size:13px;line-height:13px;color:#000;">1</div>
<div class="t" style="left:999.7px;top:155.51px;font-size:10.86px;line-height:10.86px;color:#000;">Binning Mode</div>
<div style="left:1082.3px;top:151px;width:346.4000000000001px;height:20px;border:1px solid #adadad;background:linear-gradient(#f3f3f3,#e4e4e4)"></div>
<svg style="position:absolute;left:1416.7px;top:159.0px;" width="6" height="4" viewBox="0 0 6 4"><path d="M0.6 0.6L3 3.2L5.4 0.6" fill="none" stroke="#303030" stroke-width="1.1"/></svg>
<div class="t" style="left:1088.3px;top:153.79px;font-size:13.01px;line-height:13.01px;color:#000;">Average</div>
<div class="t" style="left:999.7px;top:178.70px;font-size:10.87px;line-height:10.87px;color:#000;">Hardware</div>
<div class="t" style="left:999.7px;top:191.72px;font-size:10.85px;line-height:10.85px;color:#000;">Binning</div>
<div style="left:1082.3px;top:181px;width:346.4000000000001px;height:20px;border:1px solid #adadad;background:linear-gradient(#f3f3f3,#e4e4e4)"></div>
<svg style="position:absolute;left:1416.7px;top:189.0px;" width="6" height="4" viewBox="0 0 6 4"><path d="M0.6 0.6L3 3.2L5.4 0.6" fill="none" stroke="#303030" stroke-width="1.1"/></svg>
<div class="t" style="left:1088.3px;top:184.12px;font-size:12.62px;line-height:12.62px;color:#000;">Off</div>
<div class="t" style="left:999.7px;top:208.41px;font-size:10.98px;line-height:10.98px;color:#000;">Debayer</div>
<div class="t" style="left:999.7px;top:221.46px;font-size:10.91px;line-height:10.91px;color:#000;">Preview</div>
<div style="left:1082.3px;top:211px;width:346.4000000000001px;height:20px;border:1px solid #adadad;background:linear-gradient(#f3f3f3,#e4e4e4)"></div>
<svg style="position:absolute;left:1416.7px;top:219.0px;" width="6" height="4" viewBox="0 0 6 4"><path d="M0.6 0.6L3 3.2L5.4 0.6" fill="none" stroke="#303030" stroke-width="1.1"/></svg>
<div class="t" style="left:1088.3px;top:214.27px;font-size:12.44px;line-height:12.44px;color:#000;">On</div>
<div style="left:995px;top:78px;width:455px;height:1px;background:#8497b0"></div>
<div style="left:995px;top:79px;width:455px;height:21px;background:#97b3d4"></div>
<div style="left:995px;top:100px;width:455px;height:1px;background:#7f93aa"></div>
<div class="t" style="left:998.5px;top:85.75px;font-size:12.46px;line-height:12.46px;color:#000;">Camera Controls</div>
<svg style="position:absolute;left:1422px;top:87px;" width="10" height="6" viewBox="0 0 10 6"><path d="M0 0H10L5 5.5Z" fill="#3c3c3c"/></svg>
<svg style="position:absolute;left:1437px;top:85px;" width="9" height="12" viewBox="0 0 9 12"><path d="M2 1H7M2.5 1V7M6.5 1V7M1 7H8M4.5 7V12" stroke="#3c3c3c" stroke-width="1.3" fill="none"/></svg>
<div style="left:996.6px;top:240px;width:434.80000000000007px;height:341.5px;border:1px solid #c6c6c6;border-radius:3px;box-shadow:inset 1px 1px 0 #fff;"></div>
<div style="left:999px;top:242px;width:430px;height:19px;background:#fbead8;border-radius:2px"></div>
<svg style="position:absolute;left:999.3px;top:242.5px;" width="18" height="18" viewBox="0 0 18 18"><circle cx="9" cy="9" r="8" fill="#fff" stroke="#404040" stroke-width="1.1"/><g transform="translate(9,9.2)"><path d="M-4 2L0 -2L4 2" fill="none" stroke="#202020" stroke-width="1.9"/></g></svg>
<div class="t" style="left:1022.4px;top:245.23px;font-size:12.61px;line-height:12.61px;font-weight:bold;color:#000;">Camera Controls</div>
<svg style="position:absolute;left:1410px;top:246.8px;" width="13" height="10" viewBox="0 0 13 10"><rect x="0" y="0" width="13" height="2" fill="#2a2a2a"/><rect x="0" y="4" width="13" height="2" fill="#2a2a2a"/><rect x="0" y="8" width="13" height="2" fill="#2a2a2a"/></svg>
<div style="left:998.7px;top:264.5px;width:430.5px;height:97.0px;border:1px solid #c6c6c6;border-radius:3px;box-shadow:inset 1px 1px 0 #fff;"></div>
<div class="t" style="left:1004.5px;top:274.90px;font-size:12.88px;line-height:12.88px;color:#000;">Exposure</div>
<div style="left:1069px;top:269.4px;width:272.4px;height:24.2px;background:#fff;border:1px solid #a9a9a9"></div>
<div class="t" style="left:1072.2px;top:274.96px;font-size:12.81px;line-height:12.81px;color:#000;">10,0 s</div>
<div style="left:1353px;top:274.5px;width:13.5px;height:13.5px;background:#fff;border:1px solid #333"></div>
<svg style="position:absolute;left:1355px;top:277.0px;" width="10" height="9" viewBox="0 0 10 9"><path d="M1 4.5L3.8 7.5L9 1" fill="none" stroke="#111" stroke-width="1.7"/></svg>
<div class="t" style="left:1372px;top:274.80px;font-size:12.99px;line-height:12.99px;color:#000;">LX Mode</div>
<div style="left:1003px;top:312.4px;width:402px;height:3.2px;background:#e7e7e7;border:1px solid #d6d6d6"></div>
<div style="left:1004px;top:300px;width:1px;height:3px;background:#111"></div><div style="left:1037px;top:300px;width:1px;height:3px;background:#111"></div><div style="left:1071px;top:300px;width:1px;height:3px;background:#111"></div><div style="left:1104px;top:300px;width:1px;height:3px;background:#111"></div><div style="left:1138px;top:300px;width:1px;height:3px;background:#111"></div><div style="left:1168px;top:300px;width:1px;height:3px;background:#111"></div><div style="left:1201px;top:300px;width:1px;height:3px;background:#111"></div><div style="left:1221px;top:300px;width:1px;height:3px;background:#111"></div><div style="left:1254px;top:300px;width:1px;height:3px;background:#111"></div><div style="left:1267px;top:300px;width:1px;height:3px;background:#111"></div><div style="left:1287px;top:300px;width:1px;height:3px;background:#111"></div><div style="left:1302px;top:300px;width:1px;height:3px;background:#111"></div><div style="left:1312px;top:300px;width:1px;height:3px;background:#111"></div><div style="left:1346px;top:300px;width:1px;height:3px;background:#111"></div><div style="left:1366px;top:300px;width:1px;height:3px;background:#111"></div><div style="left:1399px;top:300px;width:1px;height:3px;background:#111"></div><div style="left:1404px;top:300px;width:1px;height:3px;background:#111"></div>
<div style="left:1004px;top:325px;width:1px;height:3px;background:#111"></div><div style="left:1037px;top:325px;width:1px;height:3px;background:#111"></div><div style="left:1071px;top:325px;width:1px;height:3px;background:#111"></div><div style="left:1104px;top:325px;width:1px;height:3px;background:#111"></div><div style="left:1138px;top:325px;width:1px;height:3px;background:#111"></div><div style="left:1168px;top:325px;width:1px;height:3px;background:#111"></div><div style="left:1201px;top:325px;width:1px;height:3px;background:#111"></div><div style="left:1221px;top:325px;width:1px;height:3px;background:#111"></div><div style="left:1254px;top:325px;width:1px;height:3px;background:#111"></div><div style="left:1267px;top:325px;width:1px;height:3px;background:#111"></div><div style="left:1287px;top:325px;width:1px;height:3px;background:#111"></div><div style="left:1302px;top:325px;width:1px;height:3px;background:#111"></div><div style="left:1312px;top:325px;width:1px;height:3px;background:#111"></div><div style="left:1346px;top:325px;width:1px;height:3px;background:#111"></div><div style="left:1366px;top:325px;width:1px;height:3px;background:#111"></div><div style="left:1399px;top:325px;width:1px;height:3px;background:#111"></div><div style="left:1404px;top:325px;width:1px;height:3px;background:#111"></div>
<div style="left:1142.7px;top:305px;width:11px;height:17.5px;background:linear-gradient(#f2f2f2,#e6e6e6);border:1px solid #a8a8a8;border-radius:1px"></div>
<div style="left:1411.4px;top:300.3px;width:16.0px;height:13.5px;background:#e3e3e3;border:1px solid #a0a0a0"></div>
<div style="left:1411.4px;top:313.3px;width:16.0px;height:14.0px;background:#e3e3e3;border:1px solid #a0a0a0"></div>
<svg style="position:absolute;left:1414.4px;top:304.05px;" width="10" height="6" viewBox="0 0 10 6"><path d="M1.5 4.8L5 1.3L8.5 4.8" fill="none" stroke="#222" stroke-width="1.7"/></svg>
<svg style="position:absolute;left:1414.4px;top:317.55px;" width="10" height="6" viewBox="0 0 10 6"><path d="M1.5 1.2L5 4.7L8.5 1.2" fill="none" stroke="#222" stroke-width="1.7"/></svg>
<div class="t" style="left:1004.2px;top:339.04px;font-size:12.83px;line-height:12.83px;color:#000;">Quick Picks</div>
<div style="left:1082.3px;top:333.6px;width:294.0px;height:23.599999999999966px;border:1px solid #adadad;background:linear-gradient(#f3f3f3,#e4e4e4)"></div>
<svg style="position:absolute;left:1364.3px;top:343.4px;" width="6" height="4" viewBox="0 0 6 4"><path d="M0.6 0.6L3 3.2L5.4 0.6" fill="none" stroke="#303030" stroke-width="1.1"/></svg>
<div style="left:1383px;top:338.5px;width:13.5px;height:13.5px;background:#fff;border:1px solid #333"></div>
<div class="t" style="left:1402.2px;top:339.34px;font-size:12.59px;line-height:12.59px;color:#000;">Auto</div>
<div class="t" style="left:999px;top:373.85px;font-size:10.93px;line-height:10.93px;color:#000;">Analogue Gain</div>
<div style="left:1085px;top:375.3px;width:249px;height:3.5px;background:#e7e7e7;border:1px solid #d6d6d6"></div>
<div style="left:1085px;top:389px;width:1px;height:3px;background:#111"></div><div style="left:1100px;top:389px;width:1px;height:3px;background:#111"></div><div style="left:1114px;top:389px;width:1px;height:3px;background:#111"></div><div style="left:1129px;top:389px;width:1px;height:3px;background:#111"></div><div style="left:1143px;top:389px;width:1px;height:3px;background:#111"></div><div style="left:1158px;top:389px;width:1px;height:3px;background:#111"></div><div style="left:1173px;top:389px;width:1px;height:3px;background:#111"></div><div style="left:1187px;top:389px;width:1px;height:3px;background:#111"></div><div style="left:1202px;top:389px;width:1px;height:3px;background:#111"></div><div style="left:1216px;top:389px;width:1px;height:3px;background:#111"></div><div style="left:1231px;top:389px;width:1px;height:3px;background:#111"></div><div style="left:1246px;top:389px;width:1px;height:3px;background:#111"></div><div style="left:1260px;top:389px;width:1px;height:3px;background:#111"></div><div style="left:1275px;top:389px;width:1px;height:3px;background:#111"></div><div style="left:1289px;top:389px;width:1px;height:3px;background:#111"></div><div style="left:1304px;top:389px;width:1px;height:3px;background:#111"></div><div style="left:1319px;top:389px;width:1px;height:3px;background:#111"></div><div style="left:1333px;top:389px;width:1px;height:3px;background:#111"></div>
<svg style="position:absolute;left:1140.9px;top:369px;" width="12.5" height="19" viewBox="0 0 12.5 19"><path d="M0.5 0.5H11.0V12.5L5.75 17.5L0.5 12.5Z" fill="#ececec" stroke="#a0a0a0" stroke-width="1"/></svg>
<div style="left:1340px;top:364.2px;width:16.700000000000045px;height:14.400000000000034px;background:#e3e3e3;border:1px solid #a0a0a0"></div>
<div style="left:1340px;top:378.1px;width:16.700000000000045px;height:14.899999999999977px;background:#e3e3e3;border:1px solid #a0a0a0"></div>
<svg style="position:absolute;left:1343.35px;top:368.4px;" width="10" height="6" viewBox="0 0 10 6"><path d="M1.5 4.8L5 1.3L8.5 4.8" fill="none" stroke="#222" stroke-width="1.7"/></svg>
<svg style="position:absolute;left:1343.35px;top:382.8px;" width="10" height="6" viewBox="0 0 10 6"><path d="M1.5 1.2L5 4.7L8.5 1.2" fill="none" stroke="#222" stroke-width="1.7"/></svg>
<div style="left:1361px;top:369.2px;width:33px;height:19.6px;background:#e1e1e1;border:1px solid #adadad"></div>
<div class="t" style="left:1364.4px;top:373.10px;font-size:12.88px;line-height:12.88px;color:#000;">Auto</div>
<div style="left:1397.2px;top:369px;width:30.200000000000045px;height:20px;background:#fff;border:1px solid #a9a9a9"></div>
<div class="t" style="left:1399.7px;top:372.23px;font-size:13.31px;line-height:13.31px;color:#000;">210</div>
<div class="t" style="left:999px;top:397.23px;font-size:10.95px;line-height:10.95px;color:#000;">Frame Rate</div>
<div class="t" style="left:999px;top:410.20px;font-size:10.99px;line-height:10.99px;color:#000;">Limit</div>
<div style="left:1082.3px;top:400px;width:346.4000000000001px;height:20px;border:1px solid #adadad;background:linear-gradient(#f3f3f3,#e4e4e4)"></div>
<svg style="position:absolute;left:1416.7px;top:408.0px;" width="6" height="4" viewBox="0 0 6 4"><path d="M0.6 0.6L3 3.2L5.4 0.6" fill="none" stroke="#303030" stroke-width="1.1"/></svg>
<div class="t" style="left:1088.3px;top:402.92px;font-size:12.85px;line-height:12.85px;color:#000;">Maximum</div>
<div class="t" style="left:999px;top:435.36px;font-size:10.91px;line-height:10.91px;color:#000;">Offset</div>
<div style="left:1085px;top:438px;width:304px;height:3.5px;background:#e7e7e7;border:1px solid #d6d6d6"></div>
<div style="left:1085px;top:451px;width:1px;height:3px;background:#111"></div><div style="left:1115px;top:451px;width:1px;height:3px;background:#111"></div><div style="left:1146px;top:451px;width:1px;height:3px;background:#111"></div><div style="left:1176px;top:451px;width:1px;height:3px;background:#111"></div><div style="left:1206px;top:451px;width:1px;height:3px;background:#111"></div><div style="left:1236px;top:451px;width:1px;height:3px;background:#111"></div><div style="left:1267px;top:451px;width:1px;height:3px;background:#111"></div><div style="left:1297px;top:451px;width:1px;height:3px;background:#111"></div><div style="left:1327px;top:451px;width:1px;height:3px;background:#111"></div><div style="left:1358px;top:451px;width:1px;height:3px;background:#111"></div><div style="left:1388px;top:451px;width:1px;height:3px;background:#111"></div>
<svg style="position:absolute;left:1089.8px;top:431px;" width="12.5" height="19" viewBox="0 0 12.5 19"><path d="M0.5 0.5H11.0V12.5L5.75 17.5L0.5 12.5Z" fill="#ececec" stroke="#a0a0a0" stroke-width="1"/></svg>
<div style="left:1397px;top:431.2px;width:30.40000000000009px;height:19.0px;background:#fff;border:1px solid #a9a9a9"></div>
<div class="t" style="left:1399.5px;top:435.27px;font-size:12.32px;line-height:12.32px;color:#000;">16</div>
<div class="t" style="left:999px;top:467.37px;font-size:10.79px;line-height:10.79px;color:#000;">USB Speed</div>
<div style="left:1085px;top:469.5px;width:304px;height:3.5px;background:#e7e7e7;border:1px solid #d6d6d6"></div>
<div style="left:1085px;top:484px;width:1px;height:3px;background:#111"></div><div style="left:1108px;top:484px;width:1px;height:3px;background:#111"></div><div style="left:1132px;top:484px;width:1px;height:3px;background:#111"></div><div style="left:1155px;top:484px;width:1px;height:3px;background:#111"></div><div style="left:1178px;top:484px;width:1px;height:3px;background:#111"></div><div style="left:1201px;top:484px;width:1px;height:3px;background:#111"></div><div style="left:1225px;top:484px;width:1px;height:3px;background:#111"></div><div style="left:1248px;top:484px;width:1px;height:3px;background:#111"></div><div style="left:1271px;top:484px;width:1px;height:3px;background:#111"></div><div style="left:1295px;top:484px;width:1px;height:3px;background:#111"></div><div style="left:1318px;top:484px;width:1px;height:3px;background:#111"></div><div style="left:1341px;top:484px;width:1px;height:3px;background:#111"></div><div style="left:1364px;top:484px;width:1px;height:3px;background:#111"></div><div style="left:1388px;top:484px;width:1px;height:3px;background:#111"></div>
<svg style="position:absolute;left:1382.6px;top:462.8px;" width="12.5" height="19" viewBox="0 0 12.5 19"><path d="M0.5 0.5H11.0V12.5L5.75 17.5L0.5 12.5Z" fill="#ececec" stroke="#a0a0a0" stroke-width="1"/></svg>
<div style="left:1397px;top:462.8px;width:30.40000000000009px;height:19.19999999999999px;background:#fff;border:1px solid #a9a9a9"></div>
<div class="t" style="left:1399.5px;top:465.53px;font-size:13.91px;line-height:13.91px;color:#000;">100</div>
<div class="t" style="left:999px;top:498.01px;font-size:10.97px;line-height:10.97px;color:#000;">Mono Binning</div>
<div style="left:1082.3px;top:494px;width:346.4000000000001px;height:20px;border:1px solid #adadad;background:linear-gradient(#f3f3f3,#e4e4e4)"></div>
<svg style="position:absolute;left:1416.7px;top:502.0px;" width="6" height="4" viewBox="0 0 6 4"><path d="M0.6 0.6L3 3.2L5.4 0.6" fill="none" stroke="#303030" stroke-width="1.1"/></svg>
<div class="t" style="left:1088.3px;top:497.12px;font-size:12.62px;line-height:12.62px;color:#000;">Off</div>
<div class="t" style="left:999px;top:528.21px;font-size:10.74px;line-height:10.74px;color:#000;">Flip</div>
<div style="left:1082.3px;top:524px;width:346.4000000000001px;height:20px;border:1px solid #adadad;background:linear-gradient(#f3f3f3,#e4e4e4)"></div>
<svg style="position:absolute;left:1416.7px;top:532.0px;" width="6" height="4" viewBox="0 0 6 4"><path d="M0.6 0.6L3 3.2L5.4 0.6" fill="none" stroke="#303030" stroke-width="1.1"/></svg>
<div class="t" style="left:1088.3px;top:527.11px;font-size:12.63px;line-height:12.63px;color:#000;">None</div>
<div class="t" style="left:999px;top:552.28px;font-size:10.89px;line-height:10.89px;color:#000;">Exposure/Gain</div>
<div class="t" style="left:999px;top:565.37px;font-size:10.79px;line-height:10.79px;color:#000;">Shift</div>
<div style="left:1085px;top:561px;width:304px;height:3.5px;background:#e7e7e7;border:1px solid #d6d6d6"></div>
<div style="left:1085px;top:576px;width:1px;height:3px;background:#111"></div><div style="left:1110px;top:576px;width:1px;height:3px;background:#111"></div><div style="left:1135px;top:576px;width:1px;height:3px;background:#111"></div><div style="left:1161px;top:576px;width:1px;height:3px;background:#111"></div><div style="left:1186px;top:576px;width:1px;height:3px;background:#111"></div><div style="left:1211px;top:576px;width:1px;height:3px;background:#111"></div><div style="left:1236px;top:576px;width:1px;height:3px;background:#111"></div><div style="left:1262px;top:576px;width:1px;height:3px;background:#111"></div><div style="left:1287px;top:576px;width:1px;height:3px;background:#111"></div><div style="left:1312px;top:576px;width:1px;height:3px;background:#111"></div><div style="left:1337px;top:576px;width:1px;height:3px;background:#111"></div><div style="left:1363px;top:576px;width:1px;height:3px;background:#111"></div><div style="left:1388px;top:576px;width:1px;height:3px;background:#111"></div>
<svg style="position:absolute;left:1230.6px;top:554.7px;" width="12.5" height="19" viewBox="0 0 12.5 19"><path d="M0.5 0.5H11.0V12.5L5.75 17.5L0.5 12.5Z" fill="#ececec" stroke="#a0a0a0" stroke-width="1"/></svg>
<div style="left:1397px;top:554.7px;width:30.40000000000009px;height:19.199999999999932px;background:#fff;border:1px solid #a9a9a9"></div>
<div class="t" style="left:1399.5px;top:558.37px;font-size:12.79px;line-height:12.79px;color:#000;">0,00</div>
<div style="left:996.6px;top:583.8px;width:434.80000000000007px;height:23.40000000000009px;border:1px solid #c6c6c6;border-radius:3px;box-shadow:inset 1px 1px 0 #fff;"></div>
<div style="left:999px;top:585.8px;width:430px;height:19.40000000000009px;background:#eff7fe;border-radius:2px"></div>
<svg style="position:absolute;left:999.3px;top:586.5px;" width="18" height="18" viewBox="0 0 18 18"><circle cx="9" cy="9" r="8" fill="#fff" stroke="#404040" stroke-width="1.1"/><g transform="translate(9,9.2)"><path d="M-4 -2L0 2L4 -2" fill="none" stroke="#202020" stroke-width="1.9"/></g></svg>
<div class="t" style="left:1022.4px;top:589.28px;font-size:12.54px;line-height:12.54px;font-weight:bold;color:#000;">Image Controls</div>
<svg style="position:absolute;left:1410px;top:590.8px;" width="13" height="10" viewBox="0 0 13 10"><rect x="0" y="0" width="13" height="2" fill="#2a2a2a"/><rect x="0" y="4" width="13" height="2" fill="#2a2a2a"/><rect x="0" y="8" width="13" height="2" fill="#2a2a2a"/></svg>
<div style="left:996.6px;top:611.3px;width:434.80000000000007px;height:23.5px;border:1px solid #c6c6c6;border-radius:3px;box-shadow:inset 1px 1px 0 #fff;"></div>
<div style="left:999px;top:613.3px;width:430px;height:19.5px;background:#87cdf9;border-radius:2px"></div>
<svg style="position:absolute;left:999.3px;top:614.05px;" width="18" height="18" viewBox="0 0 18 18"><circle cx="9" cy="9" r="8" fill="#fff" stroke="#404040" stroke-width="1.1"/><g transform="translate(9,9.2)"><path d="M-4 -2L0 2L4 -2" fill="none" stroke="#202020" stroke-width="1.9"/></g></svg>
<div class="t" style="left:1022.4px;top:616.86px;font-size:12.51px;line-height:12.51px;font-weight:bold;color:#000;">Thermal Controls</div>
<svg style="position:absolute;left:1410px;top:618.3499999999999px;" width="13" height="10" viewBox="0 0 13 10"><rect x="0" y="0" width="13" height="2" fill="#2a2a2a"/><rect x="0" y="4" width="13" height="2" fill="#2a2a2a"/><rect x="0" y="8" width="13" height="2" fill="#2a2a2a"/></svg>
<div style="left:996.6px;top:638.6px;width:434.80000000000007px;height:23.5px;border:1px solid #c6c6c6;border-radius:3px;box-shadow:inset 1px 1px 0 #fff;"></div>
<div style="left:999px;top:640.6px;width:430px;height:19.5px;background:#e6e6fa;border-radius:2px"></div>
<svg style="position:absolute;left:999.3px;top:641.35px;" width="18" height="18" viewBox="0 0 18 18"><circle cx="9" cy="9" r="8" fill="#fff" stroke="#404040" stroke-width="1.1"/><g transform="translate(9,9.2)"><path d="M-4 -2L0 2L4 -2" fill="none" stroke="#202020" stroke-width="1.9"/></g></svg>
<div class="t" style="left:1022.4px;top:644.22px;font-size:12.44px;line-height:12.44px;font-weight:bold;color:#000;">Preprocessing</div>
<svg style="position:absolute;left:1410px;top:645.65px;" width="13" height="10" viewBox="0 0 13 10"><rect x="0" y="0" width="13" height="2" fill="#2a2a2a"/><rect x="0" y="4" width="13" height="2" fill="#2a2a2a"/><rect x="0" y="8" width="13" height="2" fill="#2a2a2a"/></svg>
<div style="left:996.6px;top:666.5px;width:434.80000000000007px;height:115.5px;border:1px solid #c6c6c6;border-radius:3px;box-shadow:inset 1px 1px 0 #fff;"></div>
<div style="left:999px;top:668.2px;width:430px;height:19.199999999999932px;background:#ffb7c2;border-radius:2px"></div>
<svg style="position:absolute;left:999.3px;top:668.8px;" width="18" height="18" viewBox="0 0 18 18"><circle cx="9" cy="9" r="8" fill="#fff" stroke="#404040" stroke-width="1.1"/><g transform="translate(9,9.2)"><path d="M-4 2L0 -2L4 2" fill="none" stroke="#202020" stroke-width="1.9"/></g></svg>
<div class="t" style="left:1022.4px;top:671.68px;font-size:12.43px;line-height:12.43px;font-weight:bold;color:#000;">Display Histogram Stretch</div>
<svg style="position:absolute;left:1410px;top:673.0999999999999px;" width="13" height="10" viewBox="0 0 13 10"><rect x="0" y="0" width="13" height="2" fill="#2a2a2a"/><rect x="0" y="4" width="13" height="2" fill="#2a2a2a"/><rect x="0" y="8" width="13" height="2" fill="#2a2a2a"/></svg>
<div style="left:996.6px;top:782.6px;width:434.80000000000007px;height:23.899999999999977px;border:1px solid #c6c6c6;border-radius:3px;box-shadow:inset 1px 1px 0 #fff;"></div>
<div style="left:999px;top:785px;width:430px;height:18.799999999999955px;background:#fffad0;border-radius:2px"></div>
<svg style="position:absolute;left:999.3px;top:785.4px;" width="18" height="18" viewBox="0 0 18 18"><circle cx="9" cy="9" r="8" fill="#fff" stroke="#404040" stroke-width="1.1"/><g transform="translate(9,9.2)"><path d="M-4 -2L0 2L4 -2" fill="none" stroke="#202020" stroke-width="1.9"/></g></svg>
<div class="t" style="left:1022.4px;top:788.26px;font-size:12.45px;line-height:12.45px;font-weight:bold;color:#000;">Scope Controls</div>
<svg style="position:absolute;left:1410px;top:789.6999999999999px;" width="13" height="10" viewBox="0 0 13 10"><rect x="0" y="0" width="13" height="2" fill="#2a2a2a"/><rect x="0" y="4" width="13" height="2" fill="#2a2a2a"/><rect x="0" y="8" width="13" height="2" fill="#2a2a2a"/></svg>
<div style="left:997px;top:688.8px;width:434px;height:89.8px;background:#000"></div>
<svg style="position:absolute;left:997px;top:688.8px;" width="390" height="90" viewBox="0 0 390 90"><line x1="2" y1="1" x2="2" y2="89" stroke="#857420" stroke-width="2" stroke-dasharray="6 4"/><line x1="196" y1="1" x2="196" y2="89" stroke="#857420" stroke-width="2" stroke-dasharray="6 4"/><line x1="390" y1="1" x2="390" y2="89" stroke="#857420" stroke-width="2" stroke-dasharray="6 4"/><line x1="1" y1="89" x2="389" y2="1" stroke="#e6e600" stroke-width="1.4"/><polyline points="1,30.7 2,59.4 3,62.0 4,63.0 5,63.5 6,62.6 7,62.9 8,65.3 9,64.2 10,64.4 11,66.4 12,65.4 13,66.6 14,66.0 15,66.6 16,65.7 17,67.1 18,67.9 19,67.3 20,68.1 21,68.2 22,67.0 23,68.9 24,68.7 25,68.1 26,67.6 27,69.7 28,68.9 29,69.6 30,70.2 31,69.9 32,70.5 33,69.4 34,70.5 35,69.8 36,71.1 37,71.1 38,69.4 39,69.6 40,69.9 41,71.8 42,70.7 43,71.3 44,70.6 45,71.1 46,70.9 47,70.9 48,71.5 49,71.5 50,72.3 51,71.9 52,72.5 53,72.4 54,72.8 55,72.0 56,70.9 57,72.6 58,72.9 59,72.8 60,72.0 61,72.4 62,71.3 63,72.8 64,72.3 65,71.6 66,71.1 67,73.1 68,73.5 69,71.4 70,73.1 71,72.3 72,71.7 73,72.1 74,73.3 75,73.6 76,71.7 77,73.1 78,71.8 79,73.5 80,72.6 81,74.0 82,74.3 83,73.3 84,74.5 85,72.9 86,72.4 87,73.7 88,72.4 89,72.9 90,73.5 91,74.0 92,73.0 93,72.8 94,74.8 95,73.6 96,75.2 97,75.1 98,73.9 99,74.2 100,74.4 101,74.7 102,74.7 103,74.6 104,74.8 105,75.6 106,74.7 107,74.5 108,75.3 109,74.1 110,74.3 111,76.0 112,75.0 113,75.1 114,73.8 115,74.8 116,75.3 117,74.0 118,75.5 119,75.6 120,74.2 121,75.6 122,75.3 123,75.9 124,75.1 125,76.0 126,76.1 127,74.5 128,74.6 129,76.1 130,76.9 131,75.2 132,75.7 133,76.1 134,75.5 135,75.6 136,75.6 137,75.7 138,76.3 139,75.7 140,75.9 141,76.9 142,75.2 143,76.5 144,77.0 145,76.0 146,75.8 147,77.3 148,75.9 149,75.9 150,76.5 151,77.2 152,75.8 153,76.4 154,76.5 155,77.7 156,76.8 157,77.9 158,76.3 159,76.8 160,77.6 161,78.2 162,77.2 163,76.8 164,76.6 165,77.6 166,76.9 167,78.4 168,78.5 169,77.0 170,77.3 171,78.7 172,78.3 173,78.8 174,77.7 175,77.3 176,77.7 177,79.0 178,77.8 179,78.1 180,78.3 181,78.4 182,78.4 183,79.7 184,77.9 185,77.6 186,79.9 187,79.8 188,80.2 189,78.9 190,80.2 191,80.2 192,78.6 193,79.9 194,80.1 195,79.8 196,79.5 197,79.0 198,79.1 199,78.9 200,78.5 201,79.8 202,79.1 203,80.4 204,78.6 205,80.7 206,80.3 207,80.9 208,80.9 209,80.9 210,80.2 211,78.9 212,80.6 213,79.3 214,79.7 215,80.6 216,80.3 217,80.1 218,81.4 219,80.6 220,80.0 221,79.8 222,81.3 223,80.4 224,81.2 225,80.2 226,79.9 227,80.7 228,81.4 229,79.9 230,81.4 231,81.8 232,81.5 233,81.6 234,79.7 235,81.2 236,81.8 237,79.9 238,80.4 239,80.5 240,81.1 241,80.9 242,81.1 243,81.8 244,80.0 245,80.1 246,80.4 247,80.4 248,80.3 249,82.5 250,82.2 251,80.4 252,81.4 253,81.0 254,81.1 255,81.2 256,81.9 257,81.8 258,81.3 259,80.9 260,81.3 261,80.8 262,81.9 263,82.3 264,81.6 265,81.0 266,81.3 267,81.8 268,82.5 269,83.0 270,82.1 271,83.2 272,82.8 273,82.5 274,82.4 275,82.8 276,83.4 277,82.8 278,83.5 279,83.0 280,82.6 281,83.4 282,83.9 283,82.4 284,83.4 285,83.5 286,84.6 287,84.8 288,83.6 289,84.9 290,84.7 291,83.6 292,84.1 293,83.4 294,85.2 295,84.9 296,85.5 297,85.4 298,85.2 299,85.5 300,85.2 301,84.1 302,85.4 303,84.1 304,84.5 305,86.2 306,84.5 307,84.7 308,84.8 309,86.8 310,85.2 311,85.0 312,87.0 313,85.4 314,87.2 315,86.9 316,87.4 317,87.8 318,87.0 319,87.6 320,85.9 321,87.7 322,87.2 323,87.8 324,86.5 325,88.1 326,88.6 327,86.6 328,87.4 329,88.1 330,88.8 331,87.5 332,87.4 333,87.7 334,88.7 335,89.0 336,88.3 337,88.4 338,88.6 339,88.5 340,88.8 341,88.1 342,89.0 343,89.0 344,89.0 345,89.0 346,88.6 347,89.0 348,89.0 349,89.0 350,89.0 351,89.0 352,89.0 353,89.0 354,89.0 355,89.0 356,89.0 357,89.0 358,89.0 359,89.0 360,89.0 361,89.0 362,89.0 363,89.0 364,89.0 365,89.0 366,89.0 367,89.0 368,89.0 369,89.0 370,89.0 371,89.0 372,89.0 373,89.0 374,89.0 375,89.0 376,89.0 377,89.0 378,89.0 379,89.0 380,89.0 381,89.0 382,89.0 383,89.0 384,89.0 385,89.0 386,89.0 387,89.0 388,89.0 389,89.0" fill="none" stroke="#0000ff" stroke-width="1.3"/><polyline points="1,30.7 2,58.6 3,62.1 4,62.9 5,62.2 6,63.5 7,64.5 8,63.7 9,63.4 10,63.7 11,65.1 12,65.2 13,66.2 14,66.2 15,65.0 16,65.1 17,65.5 18,65.6 19,67.1 20,67.7 21,68.1 22,66.8 23,68.5 24,67.3 25,67.7 26,68.6 27,67.1 28,67.3 29,69.2 30,68.0 31,68.3 32,69.0 33,69.4 34,67.9 35,68.8 36,69.2 37,69.5 38,68.9 39,70.0 40,71.0 41,69.8 42,70.3 43,69.4 44,69.8 45,70.8 46,69.5 47,71.4 48,71.5 49,69.6 50,71.7 51,70.4 52,71.4 53,71.4 54,70.4 55,71.3 56,71.3 57,71.8 58,70.5 59,71.7 60,72.3 61,71.7 62,71.4 63,70.4 64,71.4 65,71.1 66,72.0 67,72.0 68,71.8 69,70.9 70,72.1 71,72.1 72,71.1 73,72.9 74,72.4 75,71.1 76,73.1 77,71.3 78,71.8 79,72.8 80,72.6 81,72.5 82,72.8 83,72.4 84,72.2 85,71.9 86,71.7 87,73.3 88,73.5 89,73.0 90,73.6 91,72.7 92,72.5 93,72.9 94,74.1 95,72.2 96,73.4 97,72.8 98,74.1 99,73.2 100,73.2 101,73.4 102,73.8 103,74.5 104,73.5 105,74.7 106,73.0 107,73.4 108,73.1 109,73.1 110,74.8 111,74.7 112,73.5 113,73.5 114,74.1 115,74.9 116,75.2 117,75.0 118,74.7 119,73.7 120,74.3 121,73.9 122,74.7 123,74.9 124,74.1 125,74.2 126,75.5 127,73.8 128,75.7 129,75.9 130,76.1 131,74.8 132,75.3 133,75.4 134,75.5 135,76.4 136,75.8 137,74.9 138,76.3 139,75.4 140,75.7 141,76.1 142,74.4 143,76.3 144,76.1 145,75.7 146,75.8 147,75.7 148,75.1 149,76.0 150,74.9 151,76.0 152,76.4 153,76.0 154,76.3 155,77.3 156,77.2 157,75.5 158,77.1 159,76.8 160,75.5 161,76.3 162,76.0 163,75.7 164,76.9 165,77.9 166,76.5 167,77.9 168,77.5 169,76.2 170,78.0 171,77.5 172,78.3 173,77.9 174,78.0 175,77.1 176,78.3 177,78.6 178,78.5 179,77.6 180,78.4 181,77.8 182,77.0 183,76.9 184,77.0 185,77.4 186,77.3 187,78.2 188,78.8 189,78.4 190,78.2 191,78.8 192,78.1 193,78.5 194,79.3 195,78.4 196,78.0 197,79.7 198,79.3 199,78.5 200,78.6 201,79.0 202,79.2 203,78.3 204,77.8 205,78.4 206,79.8 207,78.3 208,79.1 209,78.5 210,78.6 211,78.5 212,79.1 213,78.6 214,78.3 215,78.5 216,78.7 217,79.5 218,78.5 219,78.5 220,79.6 221,79.5 222,80.2 223,78.7 224,79.6 225,79.6 226,78.8 227,81.0 228,79.3 229,79.0 230,80.0 231,79.3 232,80.4 233,79.8 234,79.3 235,79.1 236,80.8 237,79.7 238,81.0 239,80.2 240,81.4 241,79.9 242,79.8 243,79.9 244,81.2 245,80.8 246,80.2 247,79.6 248,81.1 249,81.8 250,80.9 251,79.5 252,79.6 253,79.8 254,80.0 255,79.7 256,79.8 257,81.3 258,81.9 259,80.3 260,82.1 261,81.0 262,81.8 263,82.1 264,82.2 265,80.1 266,80.9 267,81.7 268,82.6 269,80.6 270,81.2 271,82.6 272,80.9 273,81.7 274,81.6 275,82.5 276,83.2 277,81.5 278,82.9 279,83.0 280,83.3 281,82.7 282,83.7 283,82.4 284,82.6 285,82.3 286,83.7 287,83.1 288,82.6 289,82.5 290,83.9 291,83.7 292,84.0 293,83.3 294,83.7 295,83.0 296,84.4 297,82.9 298,84.0 299,84.8 300,84.7 301,83.4 302,83.9 303,85.4 304,85.0 305,85.7 306,85.8 307,84.9 308,86.1 309,85.8 310,84.9 311,85.1 312,84.5 313,85.4 314,86.8 315,84.9 316,86.1 317,85.1 318,85.1 319,86.6 320,85.7 321,85.3 322,85.7 323,86.9 324,86.9 325,85.6 326,86.3 327,88.1 328,86.4 329,87.3 330,87.1 331,88.1 332,87.8 333,88.3 334,87.8 335,87.1 336,87.1 337,87.0 338,88.9 339,87.3 340,87.2 341,89.0 342,87.8 343,89.0 344,87.7 345,88.6 346,88.1 347,89.0 348,89.0 349,89.0 350,89.0 351,89.0 352,88.7 353,89.0 354,89.0 355,88.3 356,89.0 357,89.0 358,89.0 359,88.7 360,89.0 361,89.0 362,89.0 363,88.4 364,89.0 365,89.0 366,88.4 367,89.0 368,89.0 369,89.0 370,89.0 371,89.0 372,88.7 373,89.0 374,89.0 375,89.0 376,89.0 377,88.4 378,88.7 379,88.6 380,89.0 381,89.0 382,89.0 383,89.0 384,89.0 385,89.0 386,89.0 387,89.0 388,89.0 389,89.0" fill="none" stroke="#00a000" stroke-width="1.3"/><polyline points="1,30.5 2,57.4 3,61.1 4,60.6 5,62.5 6,62.7 7,61.7 8,63.6 9,62.1 10,62.1 11,63.9 12,63.1 13,63.9 14,64.5 15,63.3 16,65.2 17,64.3 18,65.0 19,65.0 20,66.2 21,66.5 22,65.6 23,65.4 24,66.1 25,66.5 26,65.8 27,66.1 28,67.7 29,67.7 30,68.5 31,68.6 32,68.5 33,67.4 34,67.1 35,67.6 36,68.1 37,68.4 38,68.5 39,68.2 40,69.5 41,68.3 42,68.9 43,70.0 44,69.9 45,68.7 46,68.6 47,70.0 48,68.2 49,68.5 50,69.5 51,69.6 52,68.8 53,68.5 54,69.0 55,70.4 56,69.7 57,71.0 58,70.6 59,71.1 60,68.9 61,69.3 62,68.9 63,70.0 64,69.8 65,69.2 66,70.4 67,69.4 68,69.9 69,69.9 70,71.3 71,70.4 72,70.1 73,69.6 74,70.6 75,71.1 76,71.3 77,72.0 78,71.8 79,70.5 80,70.3 81,71.8 82,72.0 83,71.4 84,72.2 85,71.6 86,71.0 87,70.8 88,70.5 89,72.1 90,72.7 91,72.8 92,71.8 93,72.4 94,73.1 95,72.9 96,72.4 97,72.0 98,72.3 99,71.6 100,71.7 101,72.9 102,73.7 103,72.7 104,72.4 105,72.3 106,72.6 107,73.5 108,72.7 109,74.0 110,72.1 111,72.5 112,73.1 113,72.8 114,73.9 115,73.9 116,74.2 117,73.5 118,72.2 119,73.5 120,73.5 121,73.4 122,72.9 123,74.0 124,74.6 125,72.7 126,74.1 127,73.4 128,73.8 129,74.7 130,74.9 131,74.2 132,73.2 133,75.0 134,73.3 135,73.8 136,74.9 137,73.7 138,73.7 139,75.3 140,75.4 141,73.9 142,74.1 143,73.9 144,73.6 145,73.9 146,75.7 147,73.6 148,74.0 149,74.0 150,73.8 151,74.9 152,75.4 153,75.7 154,75.3 155,75.8 156,73.9 157,74.6 158,76.3 159,74.2 160,74.8 161,75.4 162,74.9 163,75.6 164,74.5 165,75.0 166,76.8 167,74.9 168,76.8 169,75.1 170,77.1 171,76.4 172,76.4 173,75.3 174,75.1 175,76.9 176,75.6 177,75.7 178,77.2 179,77.4 180,75.5 181,77.8 182,76.8 183,76.5 184,75.9 185,76.6 186,78.1 187,76.5 188,76.2 189,76.3 190,76.3 191,76.9 192,78.3 193,76.4 194,76.7 195,78.5 196,78.7 197,78.7 198,77.0 199,77.3 200,78.8 201,77.7 202,78.2 203,77.4 204,76.7 205,77.5 206,78.5 207,78.6 208,78.2 209,78.0 210,78.2 211,78.0 212,78.2 213,79.0 214,77.5 215,78.5 216,79.4 217,79.2 218,77.6 219,79.6 220,79.3 221,77.7 222,78.0 223,77.9 224,77.6 225,79.8 226,78.5 227,79.6 228,77.8 229,77.6 230,79.7 231,79.6 232,80.1 233,79.4 234,79.0 235,79.6 236,78.0 237,79.2 238,78.9 239,78.3 240,79.4 241,78.8 242,79.2 243,78.9 244,78.8 245,79.0 246,79.6 247,80.5 248,80.5 249,80.3 250,80.3 251,79.0 252,80.7 253,79.0 254,78.7 255,79.6 256,80.2 257,79.3 258,80.1 259,79.2 260,80.9 261,79.7 262,79.8 263,80.0 264,80.9 265,81.2 266,80.2 267,80.1 268,80.6 269,79.4 270,80.3 271,81.4 272,81.3 273,79.7 274,81.7 275,80.6 276,82.1 277,80.7 278,80.5 279,81.4 280,82.2 281,81.2 282,82.4 283,82.1 284,81.3 285,81.3 286,81.8 287,81.7 288,81.7 289,82.4 290,83.1 291,82.4 292,81.5 293,81.7 294,82.2 295,82.9 296,81.8 297,81.8 298,82.5 299,82.5 300,82.0 301,83.3 302,84.3 303,83.5 304,84.1 305,84.4 306,84.5 307,84.8 308,83.8 309,84.4 310,83.2 311,85.1 312,84.0 313,84.3 314,85.4 315,84.1 316,84.0 317,85.6 318,85.1 319,84.0 320,84.0 321,84.8 322,84.1 323,86.2 324,84.7 325,85.1 326,85.4 327,85.8 328,85.7 329,86.3 330,86.5 331,86.0 332,85.3 333,87.5 334,87.0 335,85.6 336,86.6 337,87.4 338,88.1 339,86.0 340,85.9 341,87.2 342,87.1 343,88.3 344,88.2 345,87.1 346,87.4 347,87.8 348,88.6 349,87.0 350,87.5 351,86.8 352,88.2 353,86.8 354,89.0 355,88.1 356,88.3 357,87.2 358,87.6 359,88.1 360,89.0 361,88.3 362,87.7 363,89.0 364,88.6 365,88.3 366,87.5 367,87.7 368,89.0 369,87.3 370,88.3 371,88.5 372,87.9 373,88.8 374,89.0 375,89.0 376,88.8 377,87.5 378,87.1 379,88.0 380,87.7 381,87.5 382,89.0 383,87.5 384,89.0 385,89.0 386,87.3 387,89.0 388,88.0 389,87.5" fill="none" stroke="#ff0000" stroke-width="1.3"/><polyline points="1,29.5 2,57.3 3,61.0 4,61.3 5,62.4 6,62.9 7,62.1 8,63.0 9,63.3 10,63.2 11,63.6 12,63.8 13,64.8 14,64.5 15,64.4 16,64.8 17,65.4 18,65.8 19,65.6 20,66.6 21,66.0 22,67.0 23,67.2 24,66.6 25,67.7 26,67.2 27,67.6 28,67.8 29,68.0 30,67.9 31,67.4 32,68.7 33,68.9 34,68.5 35,68.7 36,68.4 37,69.5 38,69.3 39,68.7 40,69.8 41,70.2 42,69.3 43,70.5 44,69.7 45,69.3 46,70.2 47,69.7 48,70.3 49,70.1 50,69.4 51,70.2 52,70.7 53,70.2 54,70.3 55,70.9 56,70.3 57,70.4 58,70.6 59,71.1 60,70.1 61,70.0 62,71.1 63,70.8 64,70.5 65,71.5 66,71.5 67,71.0 68,71.8 69,71.6 70,71.5 71,70.9 72,70.5 73,71.6 74,71.8 75,71.2 76,71.5 77,71.7 78,71.2 79,72.0 80,71.9 81,71.6 82,71.3 83,72.0 84,71.7 85,72.4 86,71.6 87,72.0 88,71.8 89,72.2 90,72.5 91,71.8 92,71.8 93,72.5 94,72.2 95,72.7 96,72.2 97,72.2 98,72.9 99,73.6 100,73.6 101,73.1 102,73.0 103,72.5 104,72.9 105,73.0 106,74.0 107,72.8 108,74.1 109,73.4 110,73.4 111,73.2 112,74.4 113,73.2 114,73.8 115,73.8 116,73.3 117,73.4 118,74.7 119,74.4 120,74.4 121,74.7 122,73.4 123,74.4 124,74.6 125,73.8 126,74.2 127,75.1 128,74.1 129,74.8 130,73.9 131,74.8 132,74.2 133,74.6 134,74.4 135,75.3 136,75.1 137,74.8 138,75.1 139,74.7 140,75.4 141,74.6 142,75.1 143,75.2 144,74.9 145,74.4 146,74.6 147,75.4 148,74.8 149,75.7 150,75.4 151,76.1 152,76.0 153,75.9 154,75.4 155,74.9 156,75.8 157,76.1 158,76.5 159,75.4 160,75.4 161,76.8 162,76.4 163,76.1 164,76.6 165,75.7 166,76.4 167,76.6 168,76.6 169,76.0 170,76.0 171,76.8 172,77.3 173,76.2 174,76.0 175,76.2 176,77.4 177,76.8 178,77.0 179,77.9 180,77.4 181,76.9 182,77.6 183,76.6 184,77.1 185,77.8 186,77.0 187,76.9 188,77.7 189,77.5 190,78.6 191,77.2 192,78.4 193,77.8 194,78.5 195,78.0 196,78.4 197,77.9 198,77.8 199,78.2 200,78.8 201,78.1 202,77.9 203,78.3 204,77.8 205,78.2 206,78.6 207,78.6 208,78.8 209,78.3 210,77.9 211,78.0 212,78.5 213,78.3 214,79.0 215,78.5 216,79.3 217,79.1 218,79.3 219,79.4 220,79.1 221,79.0 222,78.9 223,78.5 224,79.7 225,79.3 226,78.7 227,80.0 228,79.5 229,79.6 230,79.3 231,78.9 232,80.3 233,79.0 234,79.3 235,80.4 236,79.0 237,79.7 238,79.7 239,79.3 240,80.4 241,79.6 242,79.0 243,79.8 244,79.1 245,80.2 246,80.5 247,80.6 248,79.3 249,80.3 250,79.8 251,80.1 252,79.8 253,79.9 254,79.6 255,80.4 256,79.6 257,81.0 258,79.6 259,81.1 260,79.9 261,79.8 262,80.9 263,80.5 264,81.0 265,80.7 266,81.0 267,80.2 268,81.2 269,81.0 270,81.8 271,80.4 272,80.6 273,81.6 274,82.1 275,81.4 276,81.9 277,81.8 278,81.6 279,81.8 280,82.1 281,81.2 282,81.8 283,82.5 284,81.9 285,82.3 286,82.0 287,82.3 288,82.8 289,83.1 290,83.5 291,82.8 292,82.4 293,82.7 294,82.4 295,82.8 296,83.4 297,83.6 298,83.1 299,83.1 300,83.1 301,83.3 302,83.9 303,83.6 304,84.7 305,84.3 306,84.0 307,84.3 308,83.8 309,85.0 310,85.1 311,84.6 312,85.3 313,84.6 314,84.7 315,84.8 316,84.8 317,85.6 318,85.7 319,86.0 320,85.1 321,86.2 322,85.9 323,85.8 324,86.1 325,86.1 326,85.8 327,86.2 328,86.7 329,86.9 330,87.4 331,86.3 332,87.5 333,87.5 334,87.4 335,88.0 336,86.7 337,87.8 338,88.1 339,87.0 340,87.9 341,88.5 342,87.6 343,88.6 344,88.7 345,88.0 346,87.6 347,87.8 348,88.8 349,88.2 350,88.1 351,88.3 352,89.0 353,88.1 354,87.8 355,89.0 356,88.4 357,88.6 358,89.0 359,88.5 360,88.1 361,89.0 362,88.4 363,88.4 364,89.0 365,88.4 366,89.0 367,88.5 368,88.5 369,88.3 370,88.9 371,88.9 372,88.6 373,88.8 374,88.5 375,89.0 376,89.0 377,89.0 378,89.0 379,88.1 380,88.4 381,88.3 382,88.2 383,89.0 384,89.0 385,89.0 386,88.9 387,88.2 388,88.7 389,88.1" fill="none" stroke="#ffffff" stroke-width="1.6"/><polyline points="1,1 1,58" stroke="#fff" stroke-width="1.5"/><polyline points="388,89 389,82" stroke="#fff" stroke-width="1.3"/></svg>
<div style="left:1388.3px;top:690.2px;width:19.5px;height:19.5px;background:#101010;border:1.5px solid #7eb4ea"></div>
<svg style="position:absolute;left:1388.3px;top:690.2px;" width="20" height="20" viewBox="0 0 20 20"><circle cx="10" cy="10" r="6.8" fill="none" stroke="#66ff00" stroke-width="1.8"/><rect x="9.1" y="4.8" width="1.9" height="10.4" fill="#66ff00"/></svg>
<div style="left:1410.2px;top:690.2px;width:19.5px;height:19.5px;background:#e8e8e8;border:1px solid #bdbdbd"></div>
<svg style="position:absolute;left:1410.2px;top:690.2px;" width="20" height="20" viewBox="0 0 20 20"><rect x="3" y="3" width="14" height="14" rx="2" fill="#000"/><path d="M10 4.2A5.8 5.8 0 0 1 10 15.8Z" fill="#fff"/><path d="M10 4.2A5.8 5.8 0 0 0 10 15.8" fill="none" stroke="#fff" stroke-width="0.8"/></svg>
<div style="left:1388.3px;top:712.7px;width:19.5px;height:19.5px;background:#dedede;border:1px solid #9a9a9a"></div>
<svg style="position:absolute;left:1388.3px;top:712.7px;" width="20" height="20" viewBox="0 0 20 20"><path d="M12 3L5 11H10L8 17L15 9H10Z" fill="none" stroke="#111" stroke-width="1.4" stroke-linejoin="round"/></svg>
<div style="left:1410.2px;top:712.7px;width:19.5px;height:19.5px;background:#dedede;border:1px solid #9a9a9a"></div>
<svg style="position:absolute;left:1410.2px;top:712.7px;" width="20" height="20" viewBox="0 0 20 20"><rect x="4.5" y="9" width="11" height="8" fill="#dedede" stroke="#222" stroke-width="1.1"/><path d="M6.5 9V6.5A3.5 3.5 0 0 1 13.5 6.5V9" fill="none" stroke="#222" stroke-width="1.1"/></svg>
<div style="left:1388.3px;top:734.5px;width:19.5px;height:19.5px;background:#dedede;border:1px solid #9a9a9a"></div>
<svg style="position:absolute;left:1388.3px;top:734.5px;" width="20" height="20" viewBox="0 0 20 20"><path d="M5 7.5A6 6 0 1 1 4.5 12" fill="none" stroke="#111" stroke-width="1.8"/><path d="M2.5 5.5L6.5 6L5.8 10Z" fill="#111"/></svg>
<div style="left:1388.3px;top:756.2px;width:19.5px;height:19.5px;background:#dedede;border:1px solid #9a9a9a"></div>
<svg style="position:absolute;left:1388.3px;top:756.2px;" width="20" height="20" viewBox="0 0 20 20"><path d="M3.5 3.5H14L16.5 6V16.5H3.5Z" fill="#1b5eaa"/><rect x="6.5" y="11" width="7" height="4" fill="#dedede"/><rect x="7" y="3.5" width="5" height="3.5" fill="#dedede"/><rect x="10" y="4" width="1.4" height="2.5" fill="#1b5eaa"/></svg>
<div style="left:0px;top:520px;width:974px;height:292px;background:#f0f0f0"></div>
<div style="left:0px;top:520px;width:974px;height:3px;background:#0078d7"></div>
<div style="left:971px;top:520px;width:3px;height:292px;background:#0078d7"></div>
<div style="left:0px;top:809px;width:974px;height:3px;background:#0078d7"></div>
<div class="t" style="left:3.2px;top:529.54px;font-size:12.36px;line-height:12.36px;color:#000;">Live Stacking</div>
<svg style="position:absolute;left:917px;top:532px;" width="9" height="6" viewBox="0 0 9 6"><path d="M0 0H9L4.5 5Z" fill="#111"/></svg>
<div style="left:935px;top:531px;width:9px;height:8px;border:1px solid #111;border-top-width:2px"></div>
<svg style="position:absolute;left:954px;top:531px;" width="10" height="10" viewBox="0 0 10 10"><path d="M0.7 0.7L9.3 8.8M9.3 0.7L0.7 8.8" stroke="#111" stroke-width="1.3"/></svg>
<div style="left:3px;top:545px;width:965px;height:259px;border:1px solid #a8a8a8;border-right:2px solid #a8a8a8;border-bottom:2px solid #a8a8a8"></div>
<div style="left:5.5px;top:556.3px;width:161.2px;height:76.30000000000007px;border:1px solid #d5dfe5;border-radius:3px;box-shadow:inset 1px 1px 0 #fff, 1px 1px 0 #fff"></div>
<div style="left:10px;top:554.3px;width:58.4px;height:4px;background:#f0f0f0"></div>
<div class="t" style="left:13px;top:550.56px;font-size:12.57px;line-height:12.57px;color:#000;">Overview</div>
<div class="t" style="left:12.4px;top:570.30px;font-size:12.05px;line-height:12.05px;color:#000;">Frames Stacked:</div>
<div class="t" style="left:112.2px;top:570.17px;font-size:12.2px;line-height:12.2px;color:#000;">4</div>
<div class="t" style="left:12.4px;top:591.62px;font-size:12.26px;line-height:12.26px;color:#000;">Frames Rejected: 0</div>
<div class="t" style="left:12.4px;top:612.56px;font-size:12.33px;line-height:12.33px;color:#000;">Total Exposure:</div>
<div class="t" style="left:112.2px;top:612.68px;font-size:12.19px;line-height:12.19px;color:#000;">40,00s</div>
<div style="left:5.5px;top:645.7px;width:161.2px;height:68.59999999999991px;border:1px solid #d5dfe5;border-radius:3px;box-shadow:inset 1px 1px 0 #fff, 1px 1px 0 #fff"></div>
<div style="left:10px;top:643.7px;width:48.6px;height:4px;background:#f0f0f0"></div>
<div class="t" style="left:13px;top:639.10px;font-size:12.99px;line-height:12.99px;color:#000;">Actions</div>
<div style="left:13px;top:655.5px;width:69.8px;height:22.200000000000045px;background:#dddddd;border:1px solid #707070"></div>
<div class="t" style="left:-152.1px;width:400px;text-align:center;top:661.71px;font-size:12.51px;line-height:12.51px;color:#000;">Clear</div>
<div style="left:88.9px;top:655.5px;width:69.69999999999999px;height:22.200000000000045px;background:#dddddd;border:1px solid #707070"></div>
<div class="t" style="left:-76.25px;width:400px;text-align:center;top:661.72px;font-size:12.5px;line-height:12.5px;color:#000;"></div>
<div class="t" style="left:-85.6px;width:400px;text-align:center;top:662.57px;font-size:11.5px;line-height:11.5px;color:#000;">Save</div>
<div style="left:140.2px;top:655.5px;width:1px;height:22.2px;background:#707070"></div>
<svg style="position:absolute;left:145px;top:664px;" width="9" height="5" viewBox="0 0 9 5"><path d="M0.5 0.5H8.5L4.5 4.5Z" fill="#111"/></svg>
<div style="left:13px;top:684.3px;width:69.8px;height:22.40000000000009px;background:#dddddd;border:1px solid #707070"></div>
<div class="t" style="left:-152.1px;width:400px;text-align:center;top:691.22px;font-size:11.67px;line-height:11.67px;color:#000;">Pause</div>
<div style="left:88.9px;top:684.3px;width:69.69999999999999px;height:22.40000000000009px;background:#f4f4f4;border:1px solid #adb2b5"></div>
<div class="t" style="left:-76.25px;width:400px;text-align:center;top:690.53px;font-size:12.49px;line-height:12.49px;color:#a3a3a3;">Unstack</div>
<div style="left:170.7px;top:556.1px;width:181.7px;height:174.89999999999998px;border:1px solid #d5dfe5;border-radius:3px;box-shadow:inset 1px 1px 0 #fff, 1px 1px 0 #fff"></div>
<div style="left:174px;top:554.1px;width:54.2px;height:4px;background:#f0f0f0"></div>
<div class="t" style="left:177px;top:550.54px;font-size:12.95px;line-height:12.95px;color:#000;">Controls</div>
<div style="left:177px;top:568px;width:13.5px;height:13.5px;background:#fff;border:1px solid #333"></div>
<svg style="position:absolute;left:179px;top:570.5px;" width="10" height="9" viewBox="0 0 10 9"><path d="M1 4.5L3.8 7.5L9 1" fill="none" stroke="#111" stroke-width="1.6"/></svg>
<div class="t" style="left:196px;top:569.15px;font-size:12.58px;line-height:12.58px;color:#000;">Align Frames</div>
<div style="left:177px;top:588.3px;width:13.5px;height:13.5px;background:#fff;border:1px solid #333"></div>
<div class="t" style="left:196px;top:589.74px;font-size:12.71px;line-height:12.71px;color:#000;">FWHM Filter</div>
<div style="left:177px;top:608.3px;width:13.5px;height:13.5px;background:#fff;border:1px solid #333"></div>
<div class="t" style="left:196px;top:609.77px;font-size:12.68px;line-height:12.68px;color:#000;">Brightness Filter</div>
<div style="left:177px;top:628.3px;width:13.5px;height:13.5px;background:#fff;border:1px solid #333"></div>
<svg style="position:absolute;left:179px;top:630.8px;" width="10" height="9" viewBox="0 0 10 9"><path d="M1 4.5L3.8 7.5L9 1" fill="none" stroke="#111" stroke-width="1.6"/></svg>
<div class="t" style="left:196px;top:629.84px;font-size:12.59px;line-height:12.59px;color:#000;">Auto Save on Clear/Close</div>
<div class="t" style="left:176.5px;top:654.54px;font-size:11.89px;line-height:11.89px;color:#000;">Raw Frames</div>
<div style="left:249.4px;top:647.4px;width:96.1px;height:23.0px;background:linear-gradient(#f2f2f2,#e3e3e3);border:1px solid #acacac"></div>
<div class="t" style="left:255.4px;top:654.07px;font-size:12.2px;line-height:12.2px;color:#000;">Save All</div>
<svg style="position:absolute;left:333.5px;top:656.4px;" width="6" height="5" viewBox="0 0 6 5"><path d="M0.6 1L3 3.6L5.4 1" fill="none" stroke="#404040" stroke-width="1"/></svg>
<div class="t" style="left:176.5px;top:681.10px;font-size:12.28px;line-height:12.28px;color:#000;">View</div>
<div style="left:208.2px;top:675.7px;width:137.3px;height:21.799999999999955px;background:linear-gradient(#f2f2f2,#e3e3e3);border:1px solid #acacac"></div>
<div class="t" style="left:214.2px;top:682.58px;font-size:11.96px;line-height:11.96px;color:#000;">Stack</div>
<svg style="position:absolute;left:333.5px;top:684.1px;" width="6" height="5" viewBox="0 0 6 5"><path d="M0.6 1L3 3.6L5.4 1" fill="none" stroke="#404040" stroke-width="1"/></svg>
<div class="t" style="left:176.5px;top:708.70px;font-size:12.28px;line-height:12.28px;color:#000;">Stacking</div>
<div style="left:229.4px;top:702.6px;width:116.1px;height:21.799999999999955px;background:linear-gradient(#f2f2f2,#e3e3e3);border:1px solid #acacac"></div>
<div class="t" style="left:235.4px;top:708.74px;font-size:12.83px;line-height:12.83px;color:#000;">Sigma Clipping</div>
<svg style="position:absolute;left:333.5px;top:711.0px;" width="6" height="5" viewBox="0 0 6 5"><path d="M0.6 1L3 3.6L5.4 1" fill="none" stroke="#404040" stroke-width="1"/></svg>
<div style="left:5.6px;top:743.6px;width:346.59999999999997px;height:38.799999999999955px;border:1px solid #d5dfe5;border-radius:3px;box-shadow:inset 1px 1px 0 #fff, 1px 1px 0 #fff"></div>
<div style="left:10.3px;top:741.6px;width:62.1px;height:4px;background:#f0f0f0"></div>
<div class="t" style="left:13.3px;top:737.13px;font-size:12.61px;line-height:12.61px;color:#000;">Advanced</div>
<div style="left:15px;top:758px;width:14px;height:13.5px;background:#fff;border:1px solid #333"></div>
<div class="t" style="left:34.2px;top:759.31px;font-size:12.16px;line-height:12.16px;color:#000;">Save and Reset every</div>
<div style="left:158.3px;top:755.2px;width:40.4px;height:19.5px;background:#fff;border:1px solid #abadb3"></div>
<div style="left:181px;top:756.2px;width:16.7px;height:17.5px;background:#f0f0f0;border-left:1px solid #d0d0d0"></div>
<svg style="position:absolute;left:183px;top:757px;" width="13" height="16" viewBox="0 0 13 16"><path d="M3 6.5L6.5 3.5L10 6.5" fill="none" stroke="#a8a8a8" stroke-width="1.4"/><path d="M3 10L6.5 13L10 10" fill="none" stroke="#a8a8a8" stroke-width="1.4"/></svg>
<div class="t" style="left:171.6px;top:760.22px;font-size:12.5px;line-height:12.5px;color:#707070;">5</div>
<div class="t" style="left:202.9px;top:758.65px;font-size:12.94px;line-height:12.94px;color:#000;">minutes total exposure</div>
<div style="left:355px;top:591px;width:612px;height:212px;background:#f8f8f8;border:1px solid #acacac;border-right:2px solid #a8a8a8;border-bottom:2px solid #a8a8a8"></div>
<div style="left:356.5px;top:549px;width:139.10000000000002px;height:20px;background:linear-gradient(#f0f0f0,#e5e5e5);border:1px solid #acacac"></div>
<div class="t" style="left:226.05px;width:400px;text-align:center;top:552.77px;font-size:12.44px;line-height:12.44px;color:#000;">Filter (FWHM)</div>
<div style="left:494.6px;top:549px;width:159.89999999999998px;height:20px;background:linear-gradient(#f0f0f0,#e5e5e5);border:1px solid #acacac"></div>
<div class="t" style="left:374.54999999999995px;width:400px;text-align:center;top:552.72px;font-size:12.5px;line-height:12.5px;color:#000;">Filter (Brightness)</div>
<div style="left:653.5px;top:549px;width:125.0px;height:20px;background:linear-gradient(#f0f0f0,#e5e5e5);border:1px solid #acacac"></div>
<div class="t" style="left:516.0px;width:400px;text-align:center;top:552.43px;font-size:12.84px;line-height:12.84px;color:#000;">Drift Graph</div>
<div style="left:777.5px;top:549px;width:82.79999999999995px;height:20px;background:linear-gradient(#f0f0f0,#e5e5e5);border:1px solid #acacac"></div>
<div class="t" style="left:618.9px;width:400px;text-align:center;top:552.59px;font-size:12.65px;line-height:12.65px;color:#000;">Log</div>
<div style="left:859.3px;top:549px;width:106.0px;height:20px;background:linear-gradient(#f0f0f0,#e5e5e5);border:1px solid #acacac"></div>
<div class="t" style="left:712.3px;width:400px;text-align:center;top:552.71px;font-size:12.51px;line-height:12.51px;color:#000;">Settings</div>
<div style="left:356.5px;top:569.5px;width:81.0px;height:22.0px;background:linear-gradient(#f0f0f0,#e5e5e5);border:1px solid #acacac"></div>
<div class="t" style="left:197.0px;width:400px;text-align:center;top:573.90px;font-size:12.28px;line-height:12.28px;color:#000;">Status</div>
<div style="left:546.5px;top:569.5px;width:106.70000000000005px;height:22.0px;background:linear-gradient(#f0f0f0,#e5e5e5);border:1px solid #acacac"></div>
<div class="t" style="left:399.85px;width:400px;text-align:center;top:572.99px;font-size:13.36px;line-height:13.36px;color:#000;">Alignment</div>
<div style="left:652.2px;top:569.5px;width:95.69999999999993px;height:22.0px;background:linear-gradient(#f0f0f0,#e5e5e5);border:1px solid #acacac"></div>
<div class="t" style="left:500.04999999999995px;width:400px;text-align:center;top:573.86px;font-size:12.33px;line-height:12.33px;color:#000;">Stacking</div>
<div style="left:746.9px;top:569.5px;width:125.80000000000007px;height:22.0px;background:linear-gradient(#f0f0f0,#e5e5e5);border:1px solid #acacac"></div>
<div class="t" style="left:609.8px;width:400px;text-align:center;top:573.67px;font-size:12.56px;line-height:12.56px;color:#000;">Enhancement</div>
<div style="left:871.7px;top:569.5px;width:93.59999999999991px;height:22.0px;background:linear-gradient(#f0f0f0,#e5e5e5);border:1px solid #acacac"></div>
<div class="t" style="left:718.5px;width:400px;text-align:center;top:573.52px;font-size:12.74px;line-height:12.74px;color:#000;">Guiding</div>
<div style="left:436.5px;top:567.5px;width:111.0px;height:25.0px;background:#fff;border:1px solid #acacac;border-bottom:none"></div>
<div class="t" style="left:292.0px;width:400px;text-align:center;top:572.64px;font-size:12.95px;line-height:12.95px;color:#000;">Histogram</div>
<div style="left:357px;top:593.8px;width:535px;height:205.6px;background:#000"></div>
<svg style="position:absolute;left:357px;top:593.8px;" width="535" height="205.6" viewBox="0 0 535 205.6"><line x1="0" y1="203.80000000000007" x2="535" y2="203.80000000000007" stroke="#1010ff" stroke-width="1.6"/><polyline points="215.0,203.7 216.0,196.2 219.0,46.2 221.0,3.2 223.0,16.2 224.7,32.2 226.4,48.2 228.1,59.5 229.9,70.9 231.6,82.2 233.3,87.4 235.1,92.5 236.8,97.7 238.5,102.9 240.3,108.0 242.0,113.2 244.0,120.0 246.0,128.1 247.9,138.2 249.9,141.7 251.9,147.3 253.8,153.1 255.8,155.1 257.7,162.9 259.7,167.7 261.6,172.8 263.5,171.1 265.5,176.6 267.5,178.9 269.4,188.6 271.3,191.6 273.3,190.3 275.2,199.8 277.1,201.6 279.1,201.1 281.0,202.7 282.8,199.5 284.5,198.9 286.2,203.5 288.0,203.7" fill="none" stroke="#0000ff" stroke-width="1.2" /><polyline points="218.0,203.7 220.0,166.2 222.0,96.2 224.0,26.2 226.4,6.2 229.0,21.2 231.6,56.1 233.5,68.5 235.5,80.8 237.5,93.1 239.4,105.5 241.1,110.0 242.8,114.4 244.5,115.4 246.1,120.9 247.8,125.8 249.5,128.6 251.2,136.5 252.9,139.3 254.5,145.5 256.2,145.9 257.9,149.8 259.6,151.7 261.2,155.9 262.9,157.3 264.6,158.4 266.4,166.8 268.1,169.4 269.8,170.7 271.6,172.3 273.3,171.7 275.0,173.6 276.8,176.7 278.5,177.6 280.1,184.8 281.8,183.5 283.4,188.6 285.0,186.6 286.6,192.8 288.2,193.5 289.9,188.4 291.5,191.7 293.2,198.1 294.9,195.5 296.7,200.4 298.4,196.6 300.1,194.9 301.8,200.2 303.6,202.3 305.3,199.1 307.0,198.5 308.6,200.8 310.2,203.7 311.8,203.7 313.4,200.3 315.0,203.7" fill="none" stroke="#ff0000" stroke-width="1.2" /><polyline points="217.0,203.7 219.0,166.2 220.8,96.2 222.5,26.2 224.5,3.2 227.0,21.2 229.3,42.6 231.6,63.9 233.3,71.3 235.1,78.7 236.8,86.1 238.5,93.4 240.3,100.8 242.0,108.2 243.7,110.5 245.4,113.6 247.1,117.5 248.7,127.7 250.4,127.0 252.1,134.4 253.8,137.8 255.5,138.4 257.1,145.5 258.8,143.4 260.5,150.2 262.2,148.7 263.8,153.9 265.5,154.9 267.2,157.7 268.9,165.6 270.7,166.6 272.4,165.0 274.1,171.9 275.8,168.9 277.6,172.7 279.3,178.7 281.0,179.3 282.6,176.6 284.2,185.4 285.9,180.8 287.5,182.8 289.1,188.5 290.8,186.6 292.4,187.9 294.0,187.8 295.7,189.1 297.5,194.2 299.2,192.7 301.0,196.7 302.7,196.1 304.5,197.9 306.2,203.1 308.0,200.5 309.7,202.4 311.5,203.7 313.4,200.2 315.2,200.5 317.0,203.7" fill="none" stroke="#00a000" stroke-width="1.2" /><polyline points="217.0,203.7 218.5,166.2 220.2,96.2 222.0,26.2 223.8,0.7 226.0,18.2 229.0,61.2 231.0,72.2 232.9,83.2 234.8,94.2 236.8,105.2 238.5,110.0 240.2,114.9 241.9,119.7 243.6,127.8 245.3,131.9 247.0,132.2 248.6,133.7 250.2,140.1 251.8,143.7 253.4,139.8 255.0,147.8 257.0,151.9 259.0,154.3 260.9,157.5 262.9,159.6 264.6,160.8 266.4,170.0 268.1,165.9 269.8,171.4 271.6,169.5 273.3,175.8 275.2,176.6 277.1,176.7 279.1,178.4 281.0,185.4 283.0,182.8 285.0,186.6 286.9,191.9 288.9,196.8 290.6,196.2 292.4,194.8 294.1,201.2 295.8,196.8 297.6,196.6 299.3,200.0 301.2,202.0 303.1,199.6 305.0,203.7" fill="none" stroke="#ffffff" stroke-width="1.2" /><polyline points="229.0,204.7 235.0,181.2 242.0,152.2 247.5,124.2 252.5,97.7 258.0,82.2 265.5,66.2 273.0,54.2 283.0,43.2 294.0,33.2 307.0,24.8 320.0,18.2 333.0,13.2 351.0,9.2 369.6,5.2 390.0,2.7 411.0,1.1 432.0,0.4 535.0,0.2" fill="none" stroke="#e8e800" stroke-width="1.3" /><line x1="252" y1="0" x2="252" y2="205" stroke="#ffff00" stroke-width="2" stroke-dasharray="6 4"/><line x1="283" y1="0" x2="283" y2="205" stroke="#ffff00" stroke-width="2" stroke-dasharray="6 4"/><line x1="434" y1="0" x2="434" y2="205" stroke="#ffff00" stroke-width="2" stroke-dasharray="6 4"/><text transform="translate(253.5,96.7) rotate(90)" font-family="Liberation Sans" font-size="12.2" font-weight="bold" fill="#fff" style="white-space:pre">Black Level  02,569%</text><text transform="translate(283.5,52.2) rotate(90)" font-family="Liberation Sans" font-size="12.2" font-weight="bold" fill="#fff" style="white-space:pre">Mid Level  03,795%</text><text transform="translate(417.5,0.7) rotate(90)" font-family="Liberation Sans" font-size="12.2" font-weight="bold" fill="#fff" style="white-space:pre">White Level  27,077%</text></svg>
<div class="t" style="left:664px;top:601.40px;font-size:12.52px;line-height:12.52px;color:#808080;">Horiz. Axis:</div>
<div style="left:732.3px;top:601px;width:13px;height:13px;background:#808080"></div>
<div class="t" style="left:750.8px;top:601.50px;font-size:12.4px;line-height:12.4px;color:#808080;">Zoom</div>
<div style="left:794.6px;top:601.7px;width:13px;height:13px;background:#808080"></div>
<svg style="position:absolute;left:796px;top:604px;" width="10" height="9" viewBox="0 0 10 9"><path d="M1 4.5L3.8 7.5L9 1" fill="none" stroke="#d0d0d0" stroke-width="1.5"/></svg>
<div class="t" style="left:812px;top:601.34px;font-size:12.59px;line-height:12.59px;color:#808080;">Log</div>
<div style="left:839.4px;top:595.2px;width:24.2px;height:24.2px;background:#7a7a7a;border:1px solid #5a5a5a"></div>
<svg style="position:absolute;left:839.4px;top:595.2px;" width="24" height="24" viewBox="0 0 24 24"><path d="M15 4L7 13H12.5L10 20.5L18 11H12.5Z" fill="none" stroke="#202020" stroke-width="1.6" stroke-linejoin="round"/></svg>
<div style="left:866.2px;top:595.2px;width:24.4px;height:24.2px;background:#7a7a7a;border:1px solid #5a5a5a"></div>
<svg style="position:absolute;left:866.2px;top:595.2px;" width="24" height="24" viewBox="0 0 24 24"><path d="M6.5 9A7 7 0 1 1 6 15" fill="none" stroke="#202020" stroke-width="2"/><path d="M3.5 6.5L8 7.5L6.8 12Z" fill="#202020"/></svg>
<div class="t" style="left:767.8px;top:782.07px;font-size:12.91px;line-height:12.91px;color:#8c8c8c;">Stretch Mode</div>
<div style="left:849px;top:776.9px;width:43px;height:20.1px;background:#7a7a7a"></div>
<div class="t" style="left:864px;top:781.42px;font-size:12.5px;line-height:12.5px;color:#2a2a2a;">1</div>
<div style="left:872px;top:778px;width:17.5px;height:8.5px;background:#5c5c5c;border:1px solid #4a4a4a"></div>
<div style="left:872px;top:787px;width:17.5px;height:9px;background:#6a6a6a;border:1px solid #4a4a4a"></div>
<svg style="position:absolute;left:875px;top:779px;" width="12" height="7" viewBox="0 0 12 7"><path d="M2.5 5.5L6 2L9.5 5.5" fill="none" stroke="#111" stroke-width="1.8"/></svg>
<svg style="position:absolute;left:875px;top:788px;" width="12" height="7" viewBox="0 0 12 7"><path d="M2.5 1.5L6 5L9.5 1.5" fill="none" stroke="#8a8a8a" stroke-width="1.8"/></svg>
<div style="left:892px;top:593.8px;width:74px;height:207px;background:#f8f8f8"></div>
<div style="left:892px;top:594px;width:54px;height:11.5px;background:#7a7a7a"></div>
<div style="left:892.3px;top:594.5px;width:16.8px;height:10.8px;background:#dcdcdc"></div>
<svg style="position:absolute;left:896.1999999999999px;top:595.2px;" width="9" height="10" viewBox="0 0 9 10"><path d="M4.5 0.5L8.5 5H5.8V9.5H3.2V5H0.5Z" fill="#000" stroke="#000" stroke-width="0.5" stroke-linejoin="round"/></svg>
<div style="left:892.0px;top:605.4px;width:18px;height:160.8px;background:#ff0000"></div>
<div style="left:898.9px;top:610.9px;width:4.2px;height:150px;background:#e4e4e4"></div>
<div style="left:892.0px;top:688.9px;width:18px;height:10.9px;background:#e8e8e8;border:1px solid #cfcfcf"></div>
<div style="left:892.0px;top:766.2px;width:18px;height:11px;background:#7a7a7a"></div>
<div style="left:892.8px;top:766.7px;width:16.5px;height:10.3px;background:#dcdcdc"></div>
<svg style="position:absolute;left:896.1999999999999px;top:767.2px;" width="9" height="10" viewBox="0 0 9 10"><path d="M4.5 9.5L8.5 5H5.8V0.5H3.2V5H0.5Z" fill="#000" stroke="#000" stroke-width="0.5" stroke-linejoin="round"/></svg>
<div style="left:910.3px;top:594.5px;width:16.8px;height:10.8px;background:#dcdcdc"></div>
<svg style="position:absolute;left:914.1999999999999px;top:595.2px;" width="9" height="10" viewBox="0 0 9 10"><path d="M4.5 0.5L8.5 5H5.8V9.5H3.2V5H0.5Z" fill="#000" stroke="#000" stroke-width="0.5" stroke-linejoin="round"/></svg>
<div style="left:910.0px;top:605.4px;width:18px;height:160.8px;background:#008000"></div>
<div style="left:916.9px;top:610.9px;width:4.2px;height:150px;background:#e4e4e4"></div>
<div style="left:910.0px;top:679.8px;width:18px;height:10.9px;background:#e8e8e8;border:1px solid #cfcfcf"></div>
<div style="left:910.0px;top:766.2px;width:18px;height:11px;background:#7a7a7a"></div>
<div style="left:910.8px;top:766.7px;width:16.5px;height:10.3px;background:#dcdcdc"></div>
<svg style="position:absolute;left:914.1999999999999px;top:767.2px;" width="9" height="10" viewBox="0 0 9 10"><path d="M4.5 9.5L8.5 5H5.8V0.5H3.2V5H0.5Z" fill="#000" stroke="#000" stroke-width="0.5" stroke-linejoin="round"/></svg>
<div style="left:928.3px;top:594.5px;width:16.8px;height:10.8px;background:#dcdcdc"></div>
<svg style="position:absolute;left:932.1999999999999px;top:595.2px;" width="9" height="10" viewBox="0 0 9 10"><path d="M4.5 0.5L8.5 5H5.8V9.5H3.2V5H0.5Z" fill="#000" stroke="#000" stroke-width="0.5" stroke-linejoin="round"/></svg>
<div style="left:928.0px;top:605.4px;width:18px;height:160.8px;background:#0000ff"></div>
<div style="left:934.9px;top:610.9px;width:4.2px;height:150px;background:#e4e4e4"></div>
<div style="left:928.0px;top:714.1px;width:18px;height:10.9px;background:#e8e8e8;border:1px solid #cfcfcf"></div>
<div style="left:928.0px;top:766.2px;width:18px;height:11px;background:#7a7a7a"></div>
<div style="left:928.8px;top:766.7px;width:16.5px;height:10.3px;background:#dcdcdc"></div>
<svg style="position:absolute;left:932.1999999999999px;top:767.2px;" width="9" height="10" viewBox="0 0 9 10"><path d="M4.5 9.5L8.5 5H5.8V0.5H3.2V5H0.5Z" fill="#000" stroke="#000" stroke-width="0.5" stroke-linejoin="round"/></svg>
<div style="left:946px;top:594px;width:18px;height:172px;background:linear-gradient(to right,#ff0000 0,#ff0000 5px,#008000 5px,#008000 12.5px,#0000ff 12.5px)"></div>
<div style="left:946px;top:594px;width:18px;height:172px;background:linear-gradient(rgba(128,128,128,0),rgba(128,128,128,0) 20%,rgba(128,128,128,0.85))"></div>
<div style="left:952.8px;top:599px;width:4.2px;height:167px;background:#e6e6e6"></div>
<div style="left:946px;top:764.8px;width:17.5px;height:9.5px;background:#ececec;border:1px solid #d8d8d8"></div>
<div style="left:946px;top:774.2px;width:18px;height:3px;background:#8a8a8a"></div>
<div style="left:895.3px;top:779.4px;width:19.5px;height:19.4px;background:#dcdcdc;border:1px solid #707070"></div>
<svg style="position:absolute;left:895.3px;top:779.4px;" width="20" height="20" viewBox="0 0 20 20"><path d="M12.5 3.5L5 11H10L7.5 17L15 9H10Z" fill="none" stroke="#111" stroke-width="1.4" stroke-linejoin="round"/></svg>
<div style="left:917.2px;top:779.4px;width:19.5px;height:19.4px;background:#dcdcdc;border:1px solid #707070"></div>
<svg style="position:absolute;left:917.2px;top:779.4px;" width="20" height="20" viewBox="0 0 20 20"><path d="M10 3C10.8 8 12 9.2 17 10C12 10.8 10.8 12 10 17C9.2 12 8 10.8 3 10C8 9.2 9.2 8 10 3Z" fill="#000"/></svg>
<div style="left:939.2px;top:779.4px;width:19.5px;height:19.4px;background:#dcdcdc;border:1px solid #707070"></div>
<svg style="position:absolute;left:939.2px;top:779.4px;" width="20" height="20" viewBox="0 0 20 20"><path d="M5.5 7.5A6 6 0 1 1 5 12.5" fill="none" stroke="#111" stroke-width="1.8"/><path d="M2.5 5.5L7 6.3L5.8 10.5Z" fill="#111"/></svg>
<div style="left:2px;top:812px;width:1448px;height:14px;background:#f0f0f0"></div>
<div style="left:995px;top:806px;width:455px;height:4px;background:#f0f0f0"></div>
<div style="left:974px;top:810px;width:476px;height:1.5px;background:#a0a0a0"></div>
<div style="left:1px;top:812px;width:1px;height:14px;background:#000"></div>
<div style="left:5px;top:814.5px;width:478.4px;height:20px;border:1px solid #c5c5c5;border-right-color:#dcdcdc"></div>
<div class="t" style="left:6px;top:819.61px;width:476.4px;overflow:hidden;font-size:12.63px;line-height:12.63px;padding-left:2.6999999999999993px">Previewing : 1541 frames (0 dropped) in 2:53:51,9, exposure 10,0s, last frame 10,0s</div>
<div style="left:488.8px;top:814.5px;width:279.7px;height:20px;border:1px solid #c5c5c5;border-right-color:#dcdcdc"></div>
<div class="t" style="left:489.8px;top:819.68px;width:277.7px;overflow:hidden;font-size:12.54px;line-height:12.54px;padding-left:2.1999999999999886px">Memory: 3 of 123 frames used, Disk: 19 GB free</div>
<div style="left:773.5px;top:814.5px;width:222.5px;height:20px;border:1px solid #c5c5c5;border-right-color:#dcdcdc"></div>
<div class="t" style="left:774.5px;top:819.72px;width:220.5px;overflow:hidden;font-size:12.5px;line-height:12.5px;padding-left:3.0px">Cooler: 14%, Temp: -10,0°C, Target: -10,0°C</div>
<div style="left:1001px;top:814.5px;width:180px;height:20px;border:1px solid #c5c5c5;border-right-color:#dcdcdc"></div>
<div class="t" style="left:1002px;top:819.62px;width:178px;overflow:hidden;font-size:12.62px;line-height:12.62px;padding-left:3px">11 Stacked, 0 Ignored, 110,00s</div>
<div class="t" style="left:1243.5px;top:820.18px;font-size:11.96px;line-height:11.96px;color:#000;">Frame :</div>
<div style="left:1286.7px;top:815px;width:90.1px;height:14px;background:#e6e6e6;border:1px solid #bcbcbc"></div>
<div style="left:1287.7px;top:816px;width:4px;height:12px;background:#06b025"></div>
<div class="t" style="left:1379.2px;top:820.00px;font-size:12.17px;line-height:12.17px;color:#000;">00:01/00:09</div>
<div style="left:1450px;top:2px;width:1px;height:824px;background:#000"></div>
</body></html>
